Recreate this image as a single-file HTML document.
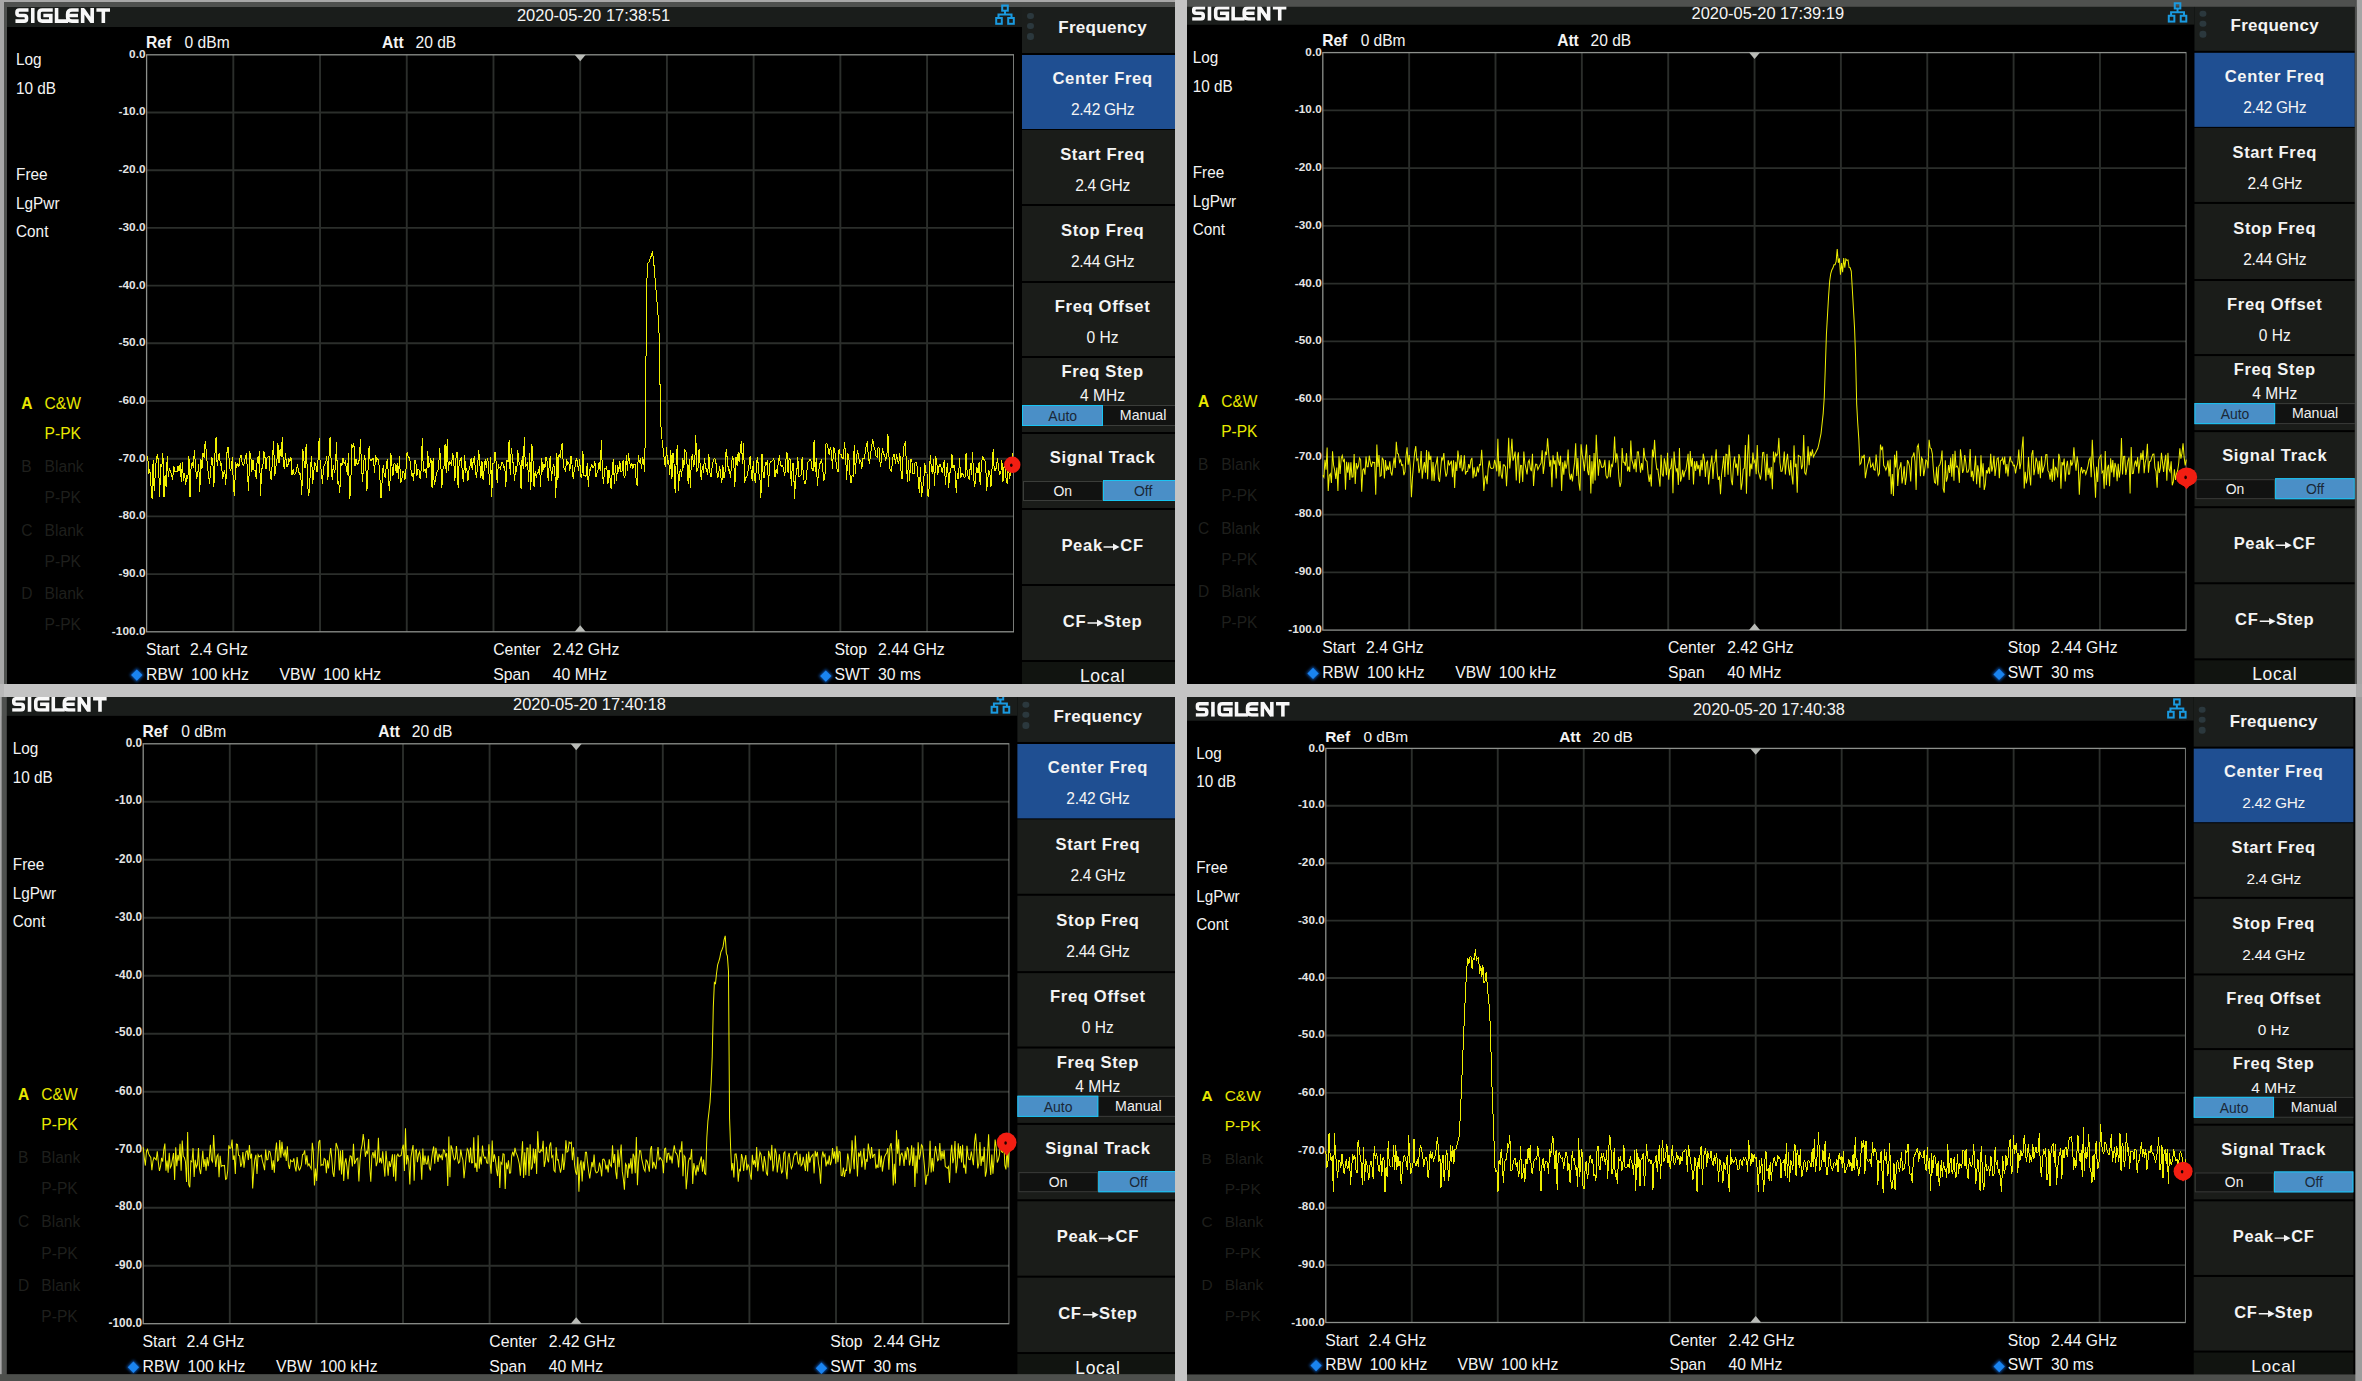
<!DOCTYPE html>
<html><head><meta charset="utf-8"><title>Spectrum</title><style>
html,body{margin:0;padding:0}
body{width:2362px;height:1381px;background:#c4c4c4;position:relative;overflow:hidden;font-family:"Liberation Sans",sans-serif}
.clip{position:absolute;overflow:hidden;background:#a7a7a7}
.pn{position:absolute;left:0;top:0;width:1300px;height:800px;transform-origin:0 0}
.pn div{position:absolute}
.t{white-space:nowrap}
.logo{font-weight:bold;font-size:20.5px;line-height:20.5px;color:#fafafa;transform:scaleX(1.1);transform-origin:0 0;letter-spacing:0px}
.dia{width:7.6px;height:7.6px;background:#1a84f0;transform:rotate(45deg);box-shadow:0 0 3px 1px #0b4fa8}
.dot{width:6.4px;height:6.4px;border-radius:50%;background:#2b383d}
.mk{width:16px;height:16px;border-radius:50%;background:#f01818}
</style></head><body>
<div class="clip" style="left:0px;top:0px;width:1175px;height:683.8px"><div class="pn" style="transform:translate(0px,0px) scale(1.00000,1.00000)">
<div style="left:-20px;top:-20px;width:1300px;height:800px;background:#000;"></div>
<div style="left:-20px;top:-20px;width:1042.2px;height:47px;background:#1a1d1b;"></div>
<svg style="position:absolute;left:14.5px;top:8.1px" width="95.8" height="15.1" viewBox="120 45 2130 340" preserveAspectRatio="none"><g fill="none" stroke="#f8f8f8" stroke-width="80"><path d="M420 89H215Q164 89 164 140V163Q164 214 215 214H325Q376 214 376 265V290Q376 341 325 341H130"/><path d="M515 45V385"/><path d="M960 89H725Q654 89 654 160V270Q654 341 725 341H916V214H750"/><path d="M1044 45V341H1300"/><path d="M1535 89H1385Q1290 89 1290 184V246Q1290 341 1385 341H1535M1330 214H1520"/><path d="M1624 385V45M1624 60L1836 370M1836 385V45"/><path d="M1930 89H2250M2084 89V385"/></g></svg>
<div class="t" style="left:593.5px;width:400px;margin-left:-200px;text-align:center;top:6.93px;font-size:16.5px;line-height:16.5px;color:#f4f4f4;">2020-05-20 17:38:51</div>
<svg style="position:absolute;left:995px;top:4px;overflow:visible;z-index:5" width="22" height="22" viewBox="0 0 22 22"><g fill="none" stroke="#1a9ae0" stroke-width="2"><rect x="7.2" y="1.5" width="5.6" height="5.2"/><path d="M10 6.7V10.6M3.5 14V10.6H16.5V14"/><rect x="1.2" y="14" width="5.6" height="5.8"/><rect x="13.2" y="14" width="5.6" height="5.8"/></g></svg>
<div class="t" style="left:15.6px;top:51.75px;font-size:16.6px;line-height:16.6px;color:#f4f4f4;transform:scaleX(0.925);transform-origin:0 0;">Log</div>
<div class="t" style="left:15.6px;top:80.75px;font-size:16.6px;line-height:16.6px;color:#f4f4f4;transform:scaleX(0.925);transform-origin:0 0;">10 dB</div>
<div class="t" style="left:15.6px;top:166.95px;font-size:16.6px;line-height:16.6px;color:#f4f4f4;transform:scaleX(0.925);transform-origin:0 0;">Free</div>
<div class="t" style="left:15.6px;top:195.75px;font-size:16.6px;line-height:16.6px;color:#f4f4f4;transform:scaleX(0.925);transform-origin:0 0;">LgPwr</div>
<div class="t" style="left:15.6px;top:224.25px;font-size:16.6px;line-height:16.6px;color:#f4f4f4;transform:scaleX(0.925);transform-origin:0 0;">Cont</div>
<div class="t" style="left:21.3px;top:395.99px;font-size:15.6px;line-height:15.6px;color:#e8e800;font-weight:bold;">A</div>
<div class="t" style="left:44.6px;top:395.99px;font-size:15.6px;line-height:15.6px;color:#e8e800;">C&amp;W</div>
<div class="t" style="left:44.6px;top:426.09px;font-size:15.6px;line-height:15.6px;color:#e8e800;">P-PK</div>
<div class="t" style="left:21.3px;top:459.09px;font-size:15.6px;line-height:15.6px;color:#1e1f1c;">B</div>
<div class="t" style="left:44.6px;top:459.09px;font-size:15.6px;line-height:15.6px;color:#1e1f1c;">Blank</div>
<div class="t" style="left:44.6px;top:489.59px;font-size:15.6px;line-height:15.6px;color:#1e1f1c;">P-PK</div>
<div class="t" style="left:21.3px;top:523.09px;font-size:15.6px;line-height:15.6px;color:#1e1f1c;">C</div>
<div class="t" style="left:44.6px;top:523.09px;font-size:15.6px;line-height:15.6px;color:#1e1f1c;">Blank</div>
<div class="t" style="left:44.6px;top:553.59px;font-size:15.6px;line-height:15.6px;color:#1e1f1c;">P-PK</div>
<div class="t" style="left:21.3px;top:586.29px;font-size:15.6px;line-height:15.6px;color:#1e1f1c;">D</div>
<div class="t" style="left:44.6px;top:586.29px;font-size:15.6px;line-height:15.6px;color:#1e1f1c;">Blank</div>
<div class="t" style="left:44.6px;top:616.79px;font-size:15.6px;line-height:15.6px;color:#1e1f1c;">P-PK</div>
<div class="t" style="left:146px;top:34.79px;font-size:15.6px;line-height:15.6px;color:#f4f4f4;font-weight:bold;">Ref</div>
<div class="t" style="left:184.6px;top:34.79px;font-size:15.6px;line-height:15.6px;color:#f4f4f4;">0 dBm</div>
<div class="t" style="left:382px;top:34.79px;font-size:15.6px;line-height:15.6px;color:#f4f4f4;font-weight:bold;">Att</div>
<div class="t" style="left:415.5px;top:34.79px;font-size:15.6px;line-height:15.6px;color:#f4f4f4;">20 dB</div>
<svg style="position:absolute;left:0;top:0;overflow:visible" width="1200" height="700"><line x1="146.6" y1="112.5" x2="1013.8" y2="112.5" stroke="#2b2e2b" stroke-width="1.9"/><line x1="233.32" y1="54.8" x2="233.32" y2="631.8" stroke="#2b2e2b" stroke-width="1.9"/><line x1="146.6" y1="170.2" x2="1013.8" y2="170.2" stroke="#2b2e2b" stroke-width="1.9"/><line x1="320.04" y1="54.8" x2="320.04" y2="631.8" stroke="#2b2e2b" stroke-width="1.9"/><line x1="146.6" y1="227.9" x2="1013.8" y2="227.9" stroke="#2b2e2b" stroke-width="1.9"/><line x1="406.76" y1="54.8" x2="406.76" y2="631.8" stroke="#2b2e2b" stroke-width="1.9"/><line x1="146.6" y1="285.6" x2="1013.8" y2="285.6" stroke="#2b2e2b" stroke-width="1.9"/><line x1="493.48" y1="54.8" x2="493.48" y2="631.8" stroke="#2b2e2b" stroke-width="1.9"/><line x1="146.6" y1="343.3" x2="1013.8" y2="343.3" stroke="#2b2e2b" stroke-width="1.9"/><line x1="580.2" y1="54.8" x2="580.2" y2="631.8" stroke="#2b2e2b" stroke-width="1.9"/><line x1="146.6" y1="401" x2="1013.8" y2="401" stroke="#2b2e2b" stroke-width="1.9"/><line x1="666.92" y1="54.8" x2="666.92" y2="631.8" stroke="#2b2e2b" stroke-width="1.9"/><line x1="146.6" y1="458.7" x2="1013.8" y2="458.7" stroke="#2b2e2b" stroke-width="1.9"/><line x1="753.64" y1="54.8" x2="753.64" y2="631.8" stroke="#2b2e2b" stroke-width="1.9"/><line x1="146.6" y1="516.4" x2="1013.8" y2="516.4" stroke="#2b2e2b" stroke-width="1.9"/><line x1="840.36" y1="54.8" x2="840.36" y2="631.8" stroke="#2b2e2b" stroke-width="1.9"/><line x1="146.6" y1="574.1" x2="1013.8" y2="574.1" stroke="#2b2e2b" stroke-width="1.9"/><line x1="927.08" y1="54.8" x2="927.08" y2="631.8" stroke="#2b2e2b" stroke-width="1.9"/><rect x="146.6" y="54.8" width="867.2" height="577" fill="none" stroke="#8d908c" stroke-width="1.3"/><path d="M574.7 54.8L585.7 54.8L580.2 61.3Z" fill="#b8bab6"/><path d="M574.7 631.8L585.7 631.8L580.2 625.3Z" fill="#b8bab6"/></svg>
<div class="t" style="left:145.6px;width:200px;margin-left:-200px;text-align:right;top:48.71px;font-size:11.8px;line-height:11.8px;color:#e4e4e4;font-weight:bold;letter-spacing:0.05px;">0.0</div>
<div class="t" style="left:145.6px;width:200px;margin-left:-200px;text-align:right;top:106.41px;font-size:11.8px;line-height:11.8px;color:#e4e4e4;font-weight:bold;letter-spacing:0.05px;">-10.0</div>
<div class="t" style="left:145.6px;width:200px;margin-left:-200px;text-align:right;top:164.11px;font-size:11.8px;line-height:11.8px;color:#e4e4e4;font-weight:bold;letter-spacing:0.05px;">-20.0</div>
<div class="t" style="left:145.6px;width:200px;margin-left:-200px;text-align:right;top:221.81px;font-size:11.8px;line-height:11.8px;color:#e4e4e4;font-weight:bold;letter-spacing:0.05px;">-30.0</div>
<div class="t" style="left:145.6px;width:200px;margin-left:-200px;text-align:right;top:279.51px;font-size:11.8px;line-height:11.8px;color:#e4e4e4;font-weight:bold;letter-spacing:0.05px;">-40.0</div>
<div class="t" style="left:145.6px;width:200px;margin-left:-200px;text-align:right;top:337.21px;font-size:11.8px;line-height:11.8px;color:#e4e4e4;font-weight:bold;letter-spacing:0.05px;">-50.0</div>
<div class="t" style="left:145.6px;width:200px;margin-left:-200px;text-align:right;top:394.91px;font-size:11.8px;line-height:11.8px;color:#e4e4e4;font-weight:bold;letter-spacing:0.05px;">-60.0</div>
<div class="t" style="left:145.6px;width:200px;margin-left:-200px;text-align:right;top:452.61px;font-size:11.8px;line-height:11.8px;color:#e4e4e4;font-weight:bold;letter-spacing:0.05px;">-70.0</div>
<div class="t" style="left:145.6px;width:200px;margin-left:-200px;text-align:right;top:510.31px;font-size:11.8px;line-height:11.8px;color:#e4e4e4;font-weight:bold;letter-spacing:0.05px;">-80.0</div>
<div class="t" style="left:145.6px;width:200px;margin-left:-200px;text-align:right;top:568.01px;font-size:11.8px;line-height:11.8px;color:#e4e4e4;font-weight:bold;letter-spacing:0.05px;">-90.0</div>
<div class="t" style="left:145.6px;width:200px;margin-left:-200px;text-align:right;top:625.71px;font-size:11.8px;line-height:11.8px;color:#e4e4e4;font-weight:bold;letter-spacing:0.05px;">-100.0</div>
<div class="t" style="left:146px;top:642.03px;font-size:15.8px;line-height:15.8px;color:#f4f4f4;">Start</div>
<div class="t" style="left:190px;top:642.03px;font-size:15.8px;line-height:15.8px;color:#f4f4f4;">2.4 GHz</div>
<div class="t" style="left:493.2px;top:642.03px;font-size:15.8px;line-height:15.8px;color:#f4f4f4;">Center</div>
<div class="t" style="left:552.7px;top:642.03px;font-size:15.8px;line-height:15.8px;color:#f4f4f4;">2.42 GHz</div>
<div class="t" style="left:834.5px;top:642.03px;font-size:15.8px;line-height:15.8px;color:#f4f4f4;">Stop</div>
<div class="t" style="left:878px;top:642.03px;font-size:15.8px;line-height:15.8px;color:#f4f4f4;">2.44 GHz</div>
<div class="t" style="left:146px;top:667.43px;font-size:15.8px;line-height:15.8px;color:#f4f4f4;">RBW</div>
<div class="t" style="left:191px;top:667.43px;font-size:15.8px;line-height:15.8px;color:#f4f4f4;">100 kHz</div>
<div class="t" style="left:279.5px;top:667.43px;font-size:15.8px;line-height:15.8px;color:#f4f4f4;">VBW</div>
<div class="t" style="left:323.3px;top:667.43px;font-size:15.8px;line-height:15.8px;color:#f4f4f4;">100 kHz</div>
<div class="t" style="left:493.2px;top:667.43px;font-size:15.8px;line-height:15.8px;color:#f4f4f4;">Span</div>
<div class="t" style="left:552.7px;top:667.43px;font-size:15.8px;line-height:15.8px;color:#f4f4f4;">40 MHz</div>
<div class="t" style="left:834.5px;top:667.43px;font-size:15.8px;line-height:15.8px;color:#f4f4f4;">SWT</div>
<div class="t" style="left:878px;top:667.43px;font-size:15.8px;line-height:15.8px;color:#f4f4f4;">30 ms</div>
<div class="dia" style="left:133.2px;top:671.2px"></div>
<div class="dia" style="left:822.2px;top:671.7px"></div>
<div style="left:1013.8px;top:27px;width:8.4px;height:800px;background:#000;"></div>
<div style="left:1022.2px;top:-20px;width:160.8px;height:72.7px;background:#1b1e1c;"></div>
<div class="dot" style="left:1027.4px;top:12.9px"></div>
<div class="dot" style="left:1027.4px;top:23.1px"></div>
<div class="dot" style="left:1027.4px;top:33.3px"></div>
<div class="t" style="left:1102.6px;width:400px;margin-left:-200px;text-align:center;top:19.31px;font-size:17px;line-height:17px;color:#f4f4f4;font-weight:bold;letter-spacing:0.3px;">Frequency</div>
<div style="left:1022.2px;top:54.5px;width:160.8px;height:74.2px;background:#1f4f92;"></div>
<div style="left:1022.2px;top:130.3px;width:160.8px;height:73.8px;background:#1a1c19;"></div>
<div style="left:1022.2px;top:206.2px;width:160.8px;height:74.4px;background:#1a1c19;"></div>
<div style="left:1022.2px;top:282.8px;width:160.8px;height:72.9px;background:#1a1c19;"></div>
<div style="left:1022.2px;top:358.2px;width:160.8px;height:73.5px;background:#1a1c19;"></div>
<div style="left:1022.2px;top:434.4px;width:160.8px;height:73.5px;background:#1a1c19;"></div>
<div style="left:1022.2px;top:510.2px;width:160.8px;height:73.5px;background:#1a1c19;"></div>
<div style="left:1022.2px;top:585.9px;width:160.8px;height:74px;background:#1a1c19;"></div>
<div style="left:1022.2px;top:662px;width:160.8px;height:40px;background:#111410;"></div>
<div class="t" style="left:1102.6px;width:400px;margin-left:-200px;text-align:center;top:70.85px;font-size:16.6px;line-height:16.6px;color:#f4f4f4;font-weight:bold;letter-spacing:0.65px;">Center Freq</div>
<div class="t" style="left:1102.6px;width:400px;margin-left:-200px;text-align:center;top:101.99px;font-size:15.6px;line-height:15.6px;color:#f4f4f4;letter-spacing:-0.35px;">2.42 GHz</div>
<div class="t" style="left:1102.6px;width:400px;margin-left:-200px;text-align:center;top:146.75px;font-size:16.6px;line-height:16.6px;color:#f4f4f4;font-weight:bold;letter-spacing:0.65px;">Start Freq</div>
<div class="t" style="left:1102.6px;width:400px;margin-left:-200px;text-align:center;top:177.99px;font-size:15.6px;line-height:15.6px;color:#f4f4f4;letter-spacing:-0.35px;">2.4 GHz</div>
<div class="t" style="left:1102.6px;width:400px;margin-left:-200px;text-align:center;top:223.25px;font-size:16.6px;line-height:16.6px;color:#f4f4f4;font-weight:bold;letter-spacing:0.65px;">Stop Freq</div>
<div class="t" style="left:1102.6px;width:400px;margin-left:-200px;text-align:center;top:253.99px;font-size:15.6px;line-height:15.6px;color:#f4f4f4;letter-spacing:-0.35px;">2.44 GHz</div>
<div class="t" style="left:1102.6px;width:400px;margin-left:-200px;text-align:center;top:298.75px;font-size:16.6px;line-height:16.6px;color:#f4f4f4;font-weight:bold;letter-spacing:0.65px;">Freq Offset</div>
<div class="t" style="left:1102.6px;width:400px;margin-left:-200px;text-align:center;top:329.99px;font-size:15.6px;line-height:15.6px;color:#f4f4f4;">0 Hz</div>
<div class="t" style="left:1102.6px;width:400px;margin-left:-200px;text-align:center;top:363.95px;font-size:16.6px;line-height:16.6px;color:#f4f4f4;font-weight:bold;letter-spacing:0.65px;">Freq Step</div>
<div class="t" style="left:1102.6px;width:400px;margin-left:-200px;text-align:center;top:388.09px;font-size:15.6px;line-height:15.6px;color:#f4f4f4;">4 MHz</div>
<div style="left:1022.2px;top:404.6px;width:160.8px;height:21.4px;background:#111211;box-sizing:border-box;border-top:1.3px solid #3b3d3a;border-bottom:1.3px solid #3b3d3a;"></div>
<div style="left:1022.2px;top:404.6px;width:81.1px;height:21.4px;background:#4a8fc7;box-sizing:border-box;border:1.6px solid #18c4f2;"></div>
<div class="t" style="left:1062.75px;width:400px;margin-left:-200px;text-align:center;top:408.55px;font-size:14px;line-height:14px;color:#1a2838;">Auto</div>
<div class="t" style="left:1143.15px;width:400px;margin-left:-200px;text-align:center;top:408.38px;font-size:14.2px;line-height:14.2px;color:#f0f0f0;">Manual</div>
<div class="t" style="left:1102.6px;width:400px;margin-left:-200px;text-align:center;top:450.35px;font-size:16.6px;line-height:16.6px;color:#f4f4f4;font-weight:bold;letter-spacing:0.65px;">Signal Track</div>
<div style="left:1023px;top:480.6px;width:80.3px;height:20.4px;background:#111211;box-sizing:border-box;border:1.3px solid #3b3d3a;"></div>
<div style="left:1103.3px;top:480.4px;width:79.7px;height:20.8px;background:#4a8fc7;box-sizing:border-box;border:1.6px solid #18c4f2;"></div>
<div class="t" style="left:1062.75px;width:400px;margin-left:-200px;text-align:center;top:483.55px;font-size:14px;line-height:14px;color:#f0f0f0;">On</div>
<div class="t" style="left:1143.15px;width:400px;margin-left:-200px;text-align:center;top:483.55px;font-size:14px;line-height:14px;color:#1a2838;">Off</div>
<div class="t" style="left:1102.6px;width:400px;margin-left:-200px;text-align:center;top:538.25px;font-size:16.6px;line-height:16.6px;color:#f4f4f4;font-weight:bold;letter-spacing:0.65px;">Peak<svg width="17" height="10" viewBox="0 0 17 10" style="display:inline-block;vertical-align:-1.2px;margin:0 0.3px"><path d="M0.5 5H12" stroke="#f4f4f4" stroke-width="1.5"/><path d="M10 1.6L16.6 5L10 8.4Z" fill="#f4f4f4"/></svg>CF</div>
<div class="t" style="left:1102.6px;width:400px;margin-left:-200px;text-align:center;top:614.25px;font-size:16.6px;line-height:16.6px;color:#f4f4f4;font-weight:bold;letter-spacing:0.65px;">CF<svg width="17" height="10" viewBox="0 0 17 10" style="display:inline-block;vertical-align:-1.2px;margin:0 0.3px"><path d="M0.5 5H12" stroke="#f4f4f4" stroke-width="1.5"/><path d="M10 1.6L16.6 5L10 8.4Z" fill="#f4f4f4"/></svg>Step</div>
<div class="t" style="left:1102.6px;width:400px;margin-left:-200px;text-align:center;top:668.49px;font-size:17.5px;line-height:17.5px;color:#f4f4f4;letter-spacing:0.7px;">Local</div>
<svg style="position:absolute;left:0;top:0;overflow:visible" width="1200" height="700"><polyline points="146.6,455.68 147.69,456.41 148.77,473.6 149.86,469.32 150.94,485.45 152.03,498.6 153.11,460.49 154.2,490.83 155.28,473.57 156.37,458.35 157.45,454.57 158.54,462.12 159.62,497.39 160.71,464.95 161.79,466.5 162.88,452.81 163.97,497.42 165.05,475.01 166.14,487.33 167.22,456.32 168.31,476.62 169.39,468.08 170.48,471.01 171.56,474.73 172.65,480.33 173.73,465.98 174.82,471.34 175.9,471.8 176.99,471.89 178.08,466.04 179.16,471.14 180.25,462.95 181.33,482.06 182.42,461.72 183.5,481.21 184.59,473.24 185.67,484.94 186.76,475.42 187.84,478.9 188.93,455.8 190.01,497.1 191.1,466.97 192.18,462.02 193.27,467.68 194.36,450.16 195.44,465.04 196.53,477.73 197.61,475.45 198.7,464.17 199.78,491.6 200.87,459.06 201.95,469.01 203.04,452.79 204.12,457.85 205.21,440.99 206.29,451.87 207.38,464.96 208.47,474.82 209.55,483.5 210.64,469.92 211.72,457.43 212.81,461.17 213.89,487.07 214.98,453.14 216.06,437.46 217.15,465.77 218.23,458.95 219.32,452.63 220.4,466.17 221.49,463.09 222.57,478.98 223.66,472.97 224.75,469.81 225.83,485.03 226.92,453.02 228,447.07 229.09,458.56 230.17,470.95 231.26,468.38 232.34,457.51 233.43,486.26 234.51,496.02 235.6,462.4 236.68,466.6 237.77,463.72 238.86,467.05 239.94,458.58 241.03,455.16 242.11,462.28 243.2,465.82 244.28,463.55 245.37,457.34 246.45,453 247.54,474.73 248.62,491.16 249.71,451.45 250.79,456.22 251.88,471.69 252.96,460.1 254.05,469.97 255.14,470.31 256.22,478.51 257.31,457.19 258.39,464.25 259.48,450.53 260.56,496.29 261.65,468.39 262.73,468.47 263.82,450.55 264.9,456.09 265.99,469.35 267.07,457.07 268.16,457.01 269.25,456.81 270.33,477.09 271.42,479.89 272.5,457.06 273.59,440.84 274.67,476.38 275.76,467.38 276.84,461.72 277.93,443.21 279.01,462.74 280.1,449.24 281.18,457.39 282.27,437.42 283.35,465.46 284.44,468.48 285.53,452.8 286.61,465.96 287.7,466.99 288.78,458.55 289.87,461.56 290.95,457.18 292.04,474.99 293.12,469.02 294.21,474.63 295.29,473.46 296.38,470.96 297.46,464.21 298.55,471.32 299.64,474.03 300.72,473.63 301.81,495.25 302.89,449.28 303.98,461.24 305.06,468.04 306.15,444.52 307.23,469.15 308.32,495.88 309.4,491.89 310.49,467.23 311.57,456.08 312.66,483.55 313.74,472.21 314.83,462.07 315.92,465.65 317,471.98 318.09,459.31 319.17,438.48 320.26,466.43 321.34,469.99 322.43,483.83 323.51,466.92 324.6,464.2 325.68,463.64 326.77,455.81 327.85,479.8 328.94,457.23 330.03,437.51 331.11,460.04 332.2,480.36 333.28,465.34 334.37,472.73 335.45,467.88 336.54,442.51 337.62,483.51 338.71,481.34 339.79,492.88 340.88,462.64 341.96,465.67 343.05,458.09 344.13,463.52 345.22,461.17 346.31,468.08 347.39,474.75 348.48,453.29 349.56,499.39 350.65,491.53 351.73,444.24 352.82,447.11 353.9,443.44 354.99,465.71 356.07,458.85 357.16,464.36 358.24,463.3 359.33,459.38 360.42,439.39 361.5,466.09 362.59,481.71 363.67,462.15 364.76,454.82 365.84,466.57 366.93,490.62 368.01,470.22 369.1,446.44 370.18,460.71 371.27,460.73 372.35,459.03 373.44,458.71 374.52,472.72 375.61,455.16 376.7,460.57 377.78,458.26 378.87,462.92 379.95,478.36 381.04,498.47 382.12,481.36 383.21,465.24 384.29,475.36 385.38,476.91 386.46,463.58 387.55,459.08 388.63,482.21 389.72,491.35 390.81,452.68 391.89,465.28 392.98,475.48 394.06,463.09 395.15,464.48 396.23,472.51 397.32,462.68 398.4,478.96 399.49,455.65 400.57,483.2 401.66,480.6 402.74,471.86 403.83,471.48 404.91,479.76 406,469.05 407.09,452.2 408.17,456.44 409.26,457.62 410.34,462.64 411.43,474.93 412.51,473.53 413.6,481.4 414.68,460.9 415.77,460.76 416.85,476.32 417.94,469.64 419.02,470.17 420.11,478.98 421.2,468.94 422.28,438.25 423.37,472.35 424.45,469.46 425.54,469.34 426.62,477.69 427.71,451.48 428.79,468.39 429.88,463.49 430.96,458.51 432.05,488.24 433.13,457.69 434.22,485.14 435.3,481.4 436.39,473 437.48,471.75 438.56,468.18 439.65,447.79 440.73,462.26 441.82,488.11 442.9,469.42 443.99,466.24 445.07,443.68 446.16,472.91 447.24,439.39 448.33,470.83 449.41,461.68 450.5,462.45 451.59,464.63 452.67,453.09 453.76,460.77 454.84,481.4 455.93,458.01 457.01,451.9 458.1,488.18 459.18,462.05 460.27,459.96 461.35,457.17 462.44,474.76 463.52,482.18 464.61,454.63 465.69,472.85 466.78,467.63 467.87,481.35 468.95,470.27 470.04,465.57 471.12,458.5 472.21,469.89 473.29,459.96 474.38,456.47 475.46,471.77 476.55,477.62 477.63,464.85 478.72,450.37 479.8,462.87 480.89,478.21 481.98,461.48 483.06,480.06 484.15,470.27 485.23,458.71 486.32,467.65 487.4,457.7 488.49,463.5 489.57,484.97 490.66,457.28 491.74,496.62 492.83,463.54 493.91,463.78 495,451.76 496.08,461.79 497.17,483.37 498.26,464.44 499.34,467.55 500.43,468.79 501.51,462.84 502.6,462.48 503.68,467.57 504.77,466.73 505.85,486.66 506.94,459.67 508.02,462.33 509.11,440.17 510.19,474.89 511.28,448.08 512.37,457.08 513.45,466.08 514.54,481.38 515.62,466.55 516.71,471.77 517.79,450.18 518.88,462.01 519.96,463.31 521.05,489.32 522.13,456.4 523.22,468.59 524.3,437.17 525.39,466.84 526.47,465.84 527.56,461.69 528.65,481.55 529.73,452.78 530.82,489.72 531.9,444.01 532.99,460.27 534.07,486.99 535.16,471.25 536.24,477.71 537.33,472.47 538.41,472.03 539.5,465.88 540.58,486.54 541.67,457.6 542.76,472.46 543.84,463.74 544.93,467.82 546.01,457.07 547.1,460.91 548.18,481.11 549.27,463.65 550.35,455.59 551.44,481.25 552.52,467.88 553.61,465.39 554.69,467.36 555.78,498.07 556.86,452.81 557.95,479.86 559.04,454.67 560.12,457.64 561.21,448.13 562.29,443.02 563.38,467.66 564.46,468.23 565.55,470.57 566.63,459.39 567.72,463.72 568.8,462.85 569.89,470.61 570.97,455.8 572.06,464.93 573.15,478.83 574.23,470.05 575.32,465.66 576.4,457.68 577.49,462.66 578.57,470.69 579.66,459.02 580.74,476.55 581.83,478.03 582.91,451.3 584,475.67 585.08,476.18 586.17,475.58 587.25,462.85 588.34,487.24 589.43,469.98 590.51,470.1 591.6,463.93 592.68,467.33 593.77,467.15 594.85,461.28 595.94,476.71 597.02,472.89 598.11,469.7 599.19,461.85 600.28,470.77 601.36,440.24 602.45,473.05 603.54,483.7 604.62,468.29 605.71,468.33 606.79,466.83 607.88,484.31 608.96,470.2 610.05,478.09 611.13,488.74 612.22,471.08 613.3,458.86 614.39,483.54 615.47,465.52 616.56,481.3 617.64,465.19 618.73,471.78 619.82,461.51 620.9,471.18 621.99,470.94 623.07,460.5 624.16,478.03 625.24,475.28 626.33,455.08 627.41,470.59 628.5,453.55 629.58,462.11 630.67,467.74 631.75,462.96 632.84,469.24 633.93,464.06 635.01,464.43 636.1,479.04 637.18,485.81 638.27,455.4 639.35,462.91 640.44,457.83 641.52,469.21 642.61,457.06 643.69,462.35 644.78,471.66 645.86,368.35 646.95,278.85 648.03,263.19 649.12,261.75 650.21,258.07 651.29,255.85 652.38,251.03 653.46,258.76 654.55,272.18 655.63,285.17 656.72,298.68 657.8,312.23 658.89,326.39 659.97,382.85 661.06,428.7 662.14,440.81 663.23,449.8 664.32,459.53 665.4,467.45 666.49,447.42 667.57,462.6 668.66,460.47 669.74,474.87 670.83,450.5 671.91,479.15 673,453.12 674.08,464.24 675.17,492.59 676.25,458.44 677.34,445.15 678.42,491.44 679.51,472.23 680.6,469.01 681.68,477.1 682.77,457.97 683.85,468.09 684.94,450.39 686.02,451.72 687.11,464.78 688.19,483.77 689.28,458.75 690.36,487.53 691.45,457.8 692.53,454.09 693.62,467.15 694.71,462.09 695.79,435.33 696.88,471.62 697.96,469.07 699.05,448.76 700.13,464.4 701.22,480.12 702.3,466.19 703.39,472.58 704.47,458.45 705.56,467.23 706.64,470.11 707.73,474.67 708.81,453.96 709.9,472.34 710.99,476.84 712.07,467.47 713.16,461.19 714.24,458.31 715.33,459.45 716.41,465.92 717.5,478.15 718.58,475.04 719.67,465.75 720.75,476.71 721.84,483.17 722.92,465.4 724.01,477.96 725.1,471.14 726.18,448.83 727.27,458.86 728.35,470.06 729.44,469.48 730.52,478.06 731.61,462.04 732.69,455.81 733.78,462.23 734.86,486.56 735.95,456.98 737.03,465.54 738.12,452.53 739.2,462.21 740.29,450 741.38,440.58 742.46,463.59 743.55,443.3 744.63,482.77 745.72,477.64 746.8,477.44 747.89,472 748.97,465.73 750.06,456.14 751.14,471.09 752.23,480.95 753.31,461.14 754.4,479.08 755.49,483.2 756.57,462.1 757.66,457.1 758.74,473.47 759.83,476.49 760.91,497.77 762,453.7 763.08,473.56 764.17,478.19 765.25,462.41 766.34,463.9 767.42,460.43 768.51,487.32 769.59,464.03 770.68,461.4 771.77,461.46 772.85,460.26 773.94,458.53 775.02,476.83 776.11,469.48 777.19,474.03 778.28,462.35 779.36,455.57 780.45,464.45 781.53,466.35 782.62,465.21 783.7,470.32 784.79,475.89 785.88,460.23 786.96,452.09 788.05,472.92 789.13,458.71 790.22,459.03 791.3,485.91 792.39,463.74 793.47,463.49 794.56,499.07 795.64,476.05 796.73,472.48 797.81,457.27 798.9,476.23 799.98,475.94 801.07,474.88 802.16,456.86 803.24,474.06 804.33,483.08 805.41,483.53 806.5,476.94 807.58,462.18 808.67,461.29 809.75,459.49 810.84,459.24 811.92,468.33 813.01,470.97 814.09,440.39 815.18,472.13 816.27,458.39 817.35,485.6 818.44,473.39 819.52,464.63 820.61,462.32 821.69,459.8 822.78,469.51 823.86,480.5 824.95,476.06 826.03,443.4 827.12,444.25 828.2,448.61 829.29,455.2 830.37,446.72 831.46,452.89 832.55,468.6 833.63,446.93 834.72,450.82 835.8,459.85 836.89,468.74 837.97,472.18 839.06,449.18 840.14,454.32 841.23,454.43 842.31,458.7 843.4,458.74 844.48,441.95 845.57,454.27 846.66,480.09 847.74,452.76 848.83,457.61 849.91,474.39 851,482.83 852.08,475.27 853.17,476.24 854.25,444.62 855.34,474.08 856.42,456.41 857.51,451.89 858.59,455.51 859.68,463.56 860.76,459.76 861.85,468.9 862.94,458.75 864.02,458.73 865.11,453.34 866.19,445.92 867.28,441.52 868.36,456.99 869.45,464.05 870.53,453.64 871.62,446.6 872.7,439.24 873.79,445.96 874.87,449.32 875.96,456.2 877.05,457.27 878.13,446.88 879.22,448.11 880.3,467.09 881.39,461.4 882.47,447.64 883.56,453.76 884.64,455.15 885.73,459.82 886.81,457.89 887.9,434.07 888.98,456.6 890.07,469.82 891.15,471.37 892.24,465.09 893.33,454.24 894.41,454.66 895.5,464 896.58,454.19 897.67,460.21 898.75,464.25 899.84,453.13 900.92,470.59 902.01,478.93 903.09,456.08 904.18,444.23 905.26,442.5 906.35,461.62 907.44,481.5 908.52,460.16 909.61,481.31 910.69,459.67 911.78,459.39 912.86,473.4 913.95,474.15 915.03,463.06 916.12,462.76 917.2,466.27 918.29,480.62 919.37,492.77 920.46,467.03 921.54,497 922.63,488.01 923.72,481.37 924.8,462.71 925.89,472.23 926.97,472.57 928.06,496.68 929.14,487.66 930.23,454.67 931.31,467.72 932.4,474.25 933.48,459.19 934.57,485.62 935.65,456.4 936.74,461.33 937.83,474.67 938.91,466.79 940,463.99 941.08,467.62 942.17,473.2 943.25,465.97 944.34,459.94 945.42,484.86 946.51,471.33 947.59,463.17 948.68,487.75 949.76,473.1 950.85,470.56 951.93,454.08 953.02,468.2 954.11,465.09 955.19,472.74 956.28,492.56 957.36,473.31 958.45,479.21 959.53,457.97 960.62,478.2 961.7,473.6 962.79,473.83 963.87,476.74 964.96,478.01 966.04,452.98 967.13,472.28 968.22,476.7 969.3,479.62 970.39,462.68 971.47,475.12 972.56,451.71 973.64,477.81 974.73,486.88 975.81,474.79 976.9,467.24 977.98,473.04 979.07,462.51 980.15,484.58 981.24,468.76 982.32,456.36 983.41,458.15 984.5,460.43 985.58,461.29 986.67,491.13 987.75,478.59 988.84,470.47 989.92,473.85 991.01,486.47 992.09,467.93 993.18,449.25 994.26,470.71 995.35,470.22 996.43,467.51 997.52,457.7 998.61,468.65 999.69,473.86 1000.78,473.29 1001.86,460.4 1002.95,482.36 1004.03,466.61 1005.12,467.96 1006.2,480.43 1007.29,484.39 1008.37,464.54 1009.46,478.8 1010.54,472.59 1011.63,461.97 1012.71,453.47 1013.8,465.76" fill="none" stroke="#f0f000" stroke-width="1" shape-rendering="crispEdges"/></svg>
<svg style="position:absolute;left:0;top:0;overflow:visible" width="10" height="10"><ellipse cx="1012.3" cy="464.8" rx="8.2" ry="8.2" fill="#f21e12"/><ellipse cx="1011.3" cy="465.3" rx="1.3" ry="1.8" fill="#200"/></svg>
<div style="left:-5px;top:-5px;width:1205px;height:6.5px;background:#a8a8a8;"></div>
<div style="left:-5px;top:-5px;width:9px;height:705px;background:#a8a8a8;"></div>
<div style="left:4px;top:1.5px;width:1196px;height:5.5px;background:#4f514f;"></div>
<div style="left:4px;top:1.5px;width:3px;height:698.5px;background:#4f514f;"></div>
</div></div>
<div class="clip" style="left:1187px;top:0px;width:1175px;height:683.8px"><div class="pn" style="transform:translate(-10.17px,-2.25px) scale(0.99573,1.00087)">
<div style="left:-20px;top:-20px;width:1300px;height:800px;background:#000;"></div>
<div style="left:-20px;top:-20px;width:1042.2px;height:47px;background:#1a1d1b;"></div>
<svg style="position:absolute;left:14.5px;top:8.1px" width="95.8" height="15.1" viewBox="120 45 2130 340" preserveAspectRatio="none"><g fill="none" stroke="#f8f8f8" stroke-width="80"><path d="M420 89H215Q164 89 164 140V163Q164 214 215 214H325Q376 214 376 265V290Q376 341 325 341H130"/><path d="M515 45V385"/><path d="M960 89H725Q654 89 654 160V270Q654 341 725 341H916V214H750"/><path d="M1044 45V341H1300"/><path d="M1535 89H1385Q1290 89 1290 184V246Q1290 341 1385 341H1535M1330 214H1520"/><path d="M1624 385V45M1624 60L1836 370M1836 385V45"/><path d="M1930 89H2250M2084 89V385"/></g></svg>
<div class="t" style="left:593.5px;width:400px;margin-left:-200px;text-align:center;top:6.93px;font-size:16.5px;line-height:16.5px;color:#f4f4f4;">2020-05-20 17:39:19</div>
<svg style="position:absolute;left:995px;top:4px;overflow:visible;z-index:5" width="22" height="22" viewBox="0 0 22 22"><g fill="none" stroke="#1a9ae0" stroke-width="2"><rect x="7.2" y="1.5" width="5.6" height="5.2"/><path d="M10 6.7V10.6M3.5 14V10.6H16.5V14"/><rect x="1.2" y="14" width="5.6" height="5.8"/><rect x="13.2" y="14" width="5.6" height="5.8"/></g></svg>
<div class="t" style="left:15.6px;top:51.75px;font-size:16.6px;line-height:16.6px;color:#f4f4f4;transform:scaleX(0.925);transform-origin:0 0;">Log</div>
<div class="t" style="left:15.6px;top:80.75px;font-size:16.6px;line-height:16.6px;color:#f4f4f4;transform:scaleX(0.925);transform-origin:0 0;">10 dB</div>
<div class="t" style="left:15.6px;top:166.95px;font-size:16.6px;line-height:16.6px;color:#f4f4f4;transform:scaleX(0.925);transform-origin:0 0;">Free</div>
<div class="t" style="left:15.6px;top:195.75px;font-size:16.6px;line-height:16.6px;color:#f4f4f4;transform:scaleX(0.925);transform-origin:0 0;">LgPwr</div>
<div class="t" style="left:15.6px;top:224.25px;font-size:16.6px;line-height:16.6px;color:#f4f4f4;transform:scaleX(0.925);transform-origin:0 0;">Cont</div>
<div class="t" style="left:21.3px;top:395.99px;font-size:15.6px;line-height:15.6px;color:#e8e800;font-weight:bold;">A</div>
<div class="t" style="left:44.6px;top:395.99px;font-size:15.6px;line-height:15.6px;color:#e8e800;">C&amp;W</div>
<div class="t" style="left:44.6px;top:426.09px;font-size:15.6px;line-height:15.6px;color:#e8e800;">P-PK</div>
<div class="t" style="left:21.3px;top:459.09px;font-size:15.6px;line-height:15.6px;color:#1e1f1c;">B</div>
<div class="t" style="left:44.6px;top:459.09px;font-size:15.6px;line-height:15.6px;color:#1e1f1c;">Blank</div>
<div class="t" style="left:44.6px;top:489.59px;font-size:15.6px;line-height:15.6px;color:#1e1f1c;">P-PK</div>
<div class="t" style="left:21.3px;top:523.09px;font-size:15.6px;line-height:15.6px;color:#1e1f1c;">C</div>
<div class="t" style="left:44.6px;top:523.09px;font-size:15.6px;line-height:15.6px;color:#1e1f1c;">Blank</div>
<div class="t" style="left:44.6px;top:553.59px;font-size:15.6px;line-height:15.6px;color:#1e1f1c;">P-PK</div>
<div class="t" style="left:21.3px;top:586.29px;font-size:15.6px;line-height:15.6px;color:#1e1f1c;">D</div>
<div class="t" style="left:44.6px;top:586.29px;font-size:15.6px;line-height:15.6px;color:#1e1f1c;">Blank</div>
<div class="t" style="left:44.6px;top:616.79px;font-size:15.6px;line-height:15.6px;color:#1e1f1c;">P-PK</div>
<div class="t" style="left:146px;top:34.79px;font-size:15.6px;line-height:15.6px;color:#f4f4f4;font-weight:bold;">Ref</div>
<div class="t" style="left:184.6px;top:34.79px;font-size:15.6px;line-height:15.6px;color:#f4f4f4;">0 dBm</div>
<div class="t" style="left:382px;top:34.79px;font-size:15.6px;line-height:15.6px;color:#f4f4f4;font-weight:bold;">Att</div>
<div class="t" style="left:415.5px;top:34.79px;font-size:15.6px;line-height:15.6px;color:#f4f4f4;">20 dB</div>
<svg style="position:absolute;left:0;top:0;overflow:visible" width="1200" height="700"><line x1="146.6" y1="112.5" x2="1013.8" y2="112.5" stroke="#2b2e2b" stroke-width="1.9"/><line x1="233.32" y1="54.8" x2="233.32" y2="631.8" stroke="#2b2e2b" stroke-width="1.9"/><line x1="146.6" y1="170.2" x2="1013.8" y2="170.2" stroke="#2b2e2b" stroke-width="1.9"/><line x1="320.04" y1="54.8" x2="320.04" y2="631.8" stroke="#2b2e2b" stroke-width="1.9"/><line x1="146.6" y1="227.9" x2="1013.8" y2="227.9" stroke="#2b2e2b" stroke-width="1.9"/><line x1="406.76" y1="54.8" x2="406.76" y2="631.8" stroke="#2b2e2b" stroke-width="1.9"/><line x1="146.6" y1="285.6" x2="1013.8" y2="285.6" stroke="#2b2e2b" stroke-width="1.9"/><line x1="493.48" y1="54.8" x2="493.48" y2="631.8" stroke="#2b2e2b" stroke-width="1.9"/><line x1="146.6" y1="343.3" x2="1013.8" y2="343.3" stroke="#2b2e2b" stroke-width="1.9"/><line x1="580.2" y1="54.8" x2="580.2" y2="631.8" stroke="#2b2e2b" stroke-width="1.9"/><line x1="146.6" y1="401" x2="1013.8" y2="401" stroke="#2b2e2b" stroke-width="1.9"/><line x1="666.92" y1="54.8" x2="666.92" y2="631.8" stroke="#2b2e2b" stroke-width="1.9"/><line x1="146.6" y1="458.7" x2="1013.8" y2="458.7" stroke="#2b2e2b" stroke-width="1.9"/><line x1="753.64" y1="54.8" x2="753.64" y2="631.8" stroke="#2b2e2b" stroke-width="1.9"/><line x1="146.6" y1="516.4" x2="1013.8" y2="516.4" stroke="#2b2e2b" stroke-width="1.9"/><line x1="840.36" y1="54.8" x2="840.36" y2="631.8" stroke="#2b2e2b" stroke-width="1.9"/><line x1="146.6" y1="574.1" x2="1013.8" y2="574.1" stroke="#2b2e2b" stroke-width="1.9"/><line x1="927.08" y1="54.8" x2="927.08" y2="631.8" stroke="#2b2e2b" stroke-width="1.9"/><rect x="146.6" y="54.8" width="867.2" height="577" fill="none" stroke="#8d908c" stroke-width="1.3"/><path d="M574.7 54.8L585.7 54.8L580.2 61.3Z" fill="#b8bab6"/><path d="M574.7 631.8L585.7 631.8L580.2 625.3Z" fill="#b8bab6"/></svg>
<div class="t" style="left:145.6px;width:200px;margin-left:-200px;text-align:right;top:48.71px;font-size:11.8px;line-height:11.8px;color:#e4e4e4;font-weight:bold;letter-spacing:0.05px;">0.0</div>
<div class="t" style="left:145.6px;width:200px;margin-left:-200px;text-align:right;top:106.41px;font-size:11.8px;line-height:11.8px;color:#e4e4e4;font-weight:bold;letter-spacing:0.05px;">-10.0</div>
<div class="t" style="left:145.6px;width:200px;margin-left:-200px;text-align:right;top:164.11px;font-size:11.8px;line-height:11.8px;color:#e4e4e4;font-weight:bold;letter-spacing:0.05px;">-20.0</div>
<div class="t" style="left:145.6px;width:200px;margin-left:-200px;text-align:right;top:221.81px;font-size:11.8px;line-height:11.8px;color:#e4e4e4;font-weight:bold;letter-spacing:0.05px;">-30.0</div>
<div class="t" style="left:145.6px;width:200px;margin-left:-200px;text-align:right;top:279.51px;font-size:11.8px;line-height:11.8px;color:#e4e4e4;font-weight:bold;letter-spacing:0.05px;">-40.0</div>
<div class="t" style="left:145.6px;width:200px;margin-left:-200px;text-align:right;top:337.21px;font-size:11.8px;line-height:11.8px;color:#e4e4e4;font-weight:bold;letter-spacing:0.05px;">-50.0</div>
<div class="t" style="left:145.6px;width:200px;margin-left:-200px;text-align:right;top:394.91px;font-size:11.8px;line-height:11.8px;color:#e4e4e4;font-weight:bold;letter-spacing:0.05px;">-60.0</div>
<div class="t" style="left:145.6px;width:200px;margin-left:-200px;text-align:right;top:452.61px;font-size:11.8px;line-height:11.8px;color:#e4e4e4;font-weight:bold;letter-spacing:0.05px;">-70.0</div>
<div class="t" style="left:145.6px;width:200px;margin-left:-200px;text-align:right;top:510.31px;font-size:11.8px;line-height:11.8px;color:#e4e4e4;font-weight:bold;letter-spacing:0.05px;">-80.0</div>
<div class="t" style="left:145.6px;width:200px;margin-left:-200px;text-align:right;top:568.01px;font-size:11.8px;line-height:11.8px;color:#e4e4e4;font-weight:bold;letter-spacing:0.05px;">-90.0</div>
<div class="t" style="left:145.6px;width:200px;margin-left:-200px;text-align:right;top:625.71px;font-size:11.8px;line-height:11.8px;color:#e4e4e4;font-weight:bold;letter-spacing:0.05px;">-100.0</div>
<div class="t" style="left:146px;top:642.03px;font-size:15.8px;line-height:15.8px;color:#f4f4f4;">Start</div>
<div class="t" style="left:190px;top:642.03px;font-size:15.8px;line-height:15.8px;color:#f4f4f4;">2.4 GHz</div>
<div class="t" style="left:493.2px;top:642.03px;font-size:15.8px;line-height:15.8px;color:#f4f4f4;">Center</div>
<div class="t" style="left:552.7px;top:642.03px;font-size:15.8px;line-height:15.8px;color:#f4f4f4;">2.42 GHz</div>
<div class="t" style="left:834.5px;top:642.03px;font-size:15.8px;line-height:15.8px;color:#f4f4f4;">Stop</div>
<div class="t" style="left:878px;top:642.03px;font-size:15.8px;line-height:15.8px;color:#f4f4f4;">2.44 GHz</div>
<div class="t" style="left:146px;top:667.43px;font-size:15.8px;line-height:15.8px;color:#f4f4f4;">RBW</div>
<div class="t" style="left:191px;top:667.43px;font-size:15.8px;line-height:15.8px;color:#f4f4f4;">100 kHz</div>
<div class="t" style="left:279.5px;top:667.43px;font-size:15.8px;line-height:15.8px;color:#f4f4f4;">VBW</div>
<div class="t" style="left:323.3px;top:667.43px;font-size:15.8px;line-height:15.8px;color:#f4f4f4;">100 kHz</div>
<div class="t" style="left:493.2px;top:667.43px;font-size:15.8px;line-height:15.8px;color:#f4f4f4;">Span</div>
<div class="t" style="left:552.7px;top:667.43px;font-size:15.8px;line-height:15.8px;color:#f4f4f4;">40 MHz</div>
<div class="t" style="left:834.5px;top:667.43px;font-size:15.8px;line-height:15.8px;color:#f4f4f4;">SWT</div>
<div class="t" style="left:878px;top:667.43px;font-size:15.8px;line-height:15.8px;color:#f4f4f4;">30 ms</div>
<div class="dia" style="left:133.2px;top:671.2px"></div>
<div class="dia" style="left:822.2px;top:671.7px"></div>
<div style="left:1013.8px;top:27px;width:8.4px;height:800px;background:#000;"></div>
<div style="left:1022.2px;top:-20px;width:160.8px;height:72.7px;background:#1b1e1c;"></div>
<div class="dot" style="left:1027.4px;top:12.9px"></div>
<div class="dot" style="left:1027.4px;top:23.1px"></div>
<div class="dot" style="left:1027.4px;top:33.3px"></div>
<div class="t" style="left:1102.6px;width:400px;margin-left:-200px;text-align:center;top:19.31px;font-size:17px;line-height:17px;color:#f4f4f4;font-weight:bold;letter-spacing:0.3px;">Frequency</div>
<div style="left:1022.2px;top:54.5px;width:160.8px;height:74.2px;background:#1f4f92;"></div>
<div style="left:1022.2px;top:130.3px;width:160.8px;height:73.8px;background:#1a1c19;"></div>
<div style="left:1022.2px;top:206.2px;width:160.8px;height:74.4px;background:#1a1c19;"></div>
<div style="left:1022.2px;top:282.8px;width:160.8px;height:72.9px;background:#1a1c19;"></div>
<div style="left:1022.2px;top:358.2px;width:160.8px;height:73.5px;background:#1a1c19;"></div>
<div style="left:1022.2px;top:434.4px;width:160.8px;height:73.5px;background:#1a1c19;"></div>
<div style="left:1022.2px;top:510.2px;width:160.8px;height:73.5px;background:#1a1c19;"></div>
<div style="left:1022.2px;top:585.9px;width:160.8px;height:74px;background:#1a1c19;"></div>
<div style="left:1022.2px;top:662px;width:160.8px;height:40px;background:#111410;"></div>
<div class="t" style="left:1102.6px;width:400px;margin-left:-200px;text-align:center;top:70.85px;font-size:16.6px;line-height:16.6px;color:#f4f4f4;font-weight:bold;letter-spacing:0.65px;">Center Freq</div>
<div class="t" style="left:1102.6px;width:400px;margin-left:-200px;text-align:center;top:101.99px;font-size:15.6px;line-height:15.6px;color:#f4f4f4;letter-spacing:-0.35px;">2.42 GHz</div>
<div class="t" style="left:1102.6px;width:400px;margin-left:-200px;text-align:center;top:146.75px;font-size:16.6px;line-height:16.6px;color:#f4f4f4;font-weight:bold;letter-spacing:0.65px;">Start Freq</div>
<div class="t" style="left:1102.6px;width:400px;margin-left:-200px;text-align:center;top:177.99px;font-size:15.6px;line-height:15.6px;color:#f4f4f4;letter-spacing:-0.35px;">2.4 GHz</div>
<div class="t" style="left:1102.6px;width:400px;margin-left:-200px;text-align:center;top:223.25px;font-size:16.6px;line-height:16.6px;color:#f4f4f4;font-weight:bold;letter-spacing:0.65px;">Stop Freq</div>
<div class="t" style="left:1102.6px;width:400px;margin-left:-200px;text-align:center;top:253.99px;font-size:15.6px;line-height:15.6px;color:#f4f4f4;letter-spacing:-0.35px;">2.44 GHz</div>
<div class="t" style="left:1102.6px;width:400px;margin-left:-200px;text-align:center;top:298.75px;font-size:16.6px;line-height:16.6px;color:#f4f4f4;font-weight:bold;letter-spacing:0.65px;">Freq Offset</div>
<div class="t" style="left:1102.6px;width:400px;margin-left:-200px;text-align:center;top:329.99px;font-size:15.6px;line-height:15.6px;color:#f4f4f4;">0 Hz</div>
<div class="t" style="left:1102.6px;width:400px;margin-left:-200px;text-align:center;top:363.95px;font-size:16.6px;line-height:16.6px;color:#f4f4f4;font-weight:bold;letter-spacing:0.65px;">Freq Step</div>
<div class="t" style="left:1102.6px;width:400px;margin-left:-200px;text-align:center;top:388.09px;font-size:15.6px;line-height:15.6px;color:#f4f4f4;">4 MHz</div>
<div style="left:1022.2px;top:404.6px;width:160.8px;height:21.4px;background:#111211;box-sizing:border-box;border-top:1.3px solid #3b3d3a;border-bottom:1.3px solid #3b3d3a;"></div>
<div style="left:1022.2px;top:404.6px;width:81.1px;height:21.4px;background:#4a8fc7;box-sizing:border-box;border:1.6px solid #18c4f2;"></div>
<div class="t" style="left:1062.75px;width:400px;margin-left:-200px;text-align:center;top:408.55px;font-size:14px;line-height:14px;color:#1a2838;">Auto</div>
<div class="t" style="left:1143.15px;width:400px;margin-left:-200px;text-align:center;top:408.38px;font-size:14.2px;line-height:14.2px;color:#f0f0f0;">Manual</div>
<div class="t" style="left:1102.6px;width:400px;margin-left:-200px;text-align:center;top:450.35px;font-size:16.6px;line-height:16.6px;color:#f4f4f4;font-weight:bold;letter-spacing:0.65px;">Signal Track</div>
<div style="left:1023px;top:480.6px;width:80.3px;height:20.4px;background:#111211;box-sizing:border-box;border:1.3px solid #3b3d3a;"></div>
<div style="left:1103.3px;top:480.4px;width:79.7px;height:20.8px;background:#4a8fc7;box-sizing:border-box;border:1.6px solid #18c4f2;"></div>
<div class="t" style="left:1062.75px;width:400px;margin-left:-200px;text-align:center;top:483.55px;font-size:14px;line-height:14px;color:#f0f0f0;">On</div>
<div class="t" style="left:1143.15px;width:400px;margin-left:-200px;text-align:center;top:483.55px;font-size:14px;line-height:14px;color:#1a2838;">Off</div>
<div class="t" style="left:1102.6px;width:400px;margin-left:-200px;text-align:center;top:538.25px;font-size:16.6px;line-height:16.6px;color:#f4f4f4;font-weight:bold;letter-spacing:0.65px;">Peak<svg width="17" height="10" viewBox="0 0 17 10" style="display:inline-block;vertical-align:-1.2px;margin:0 0.3px"><path d="M0.5 5H12" stroke="#f4f4f4" stroke-width="1.5"/><path d="M10 1.6L16.6 5L10 8.4Z" fill="#f4f4f4"/></svg>CF</div>
<div class="t" style="left:1102.6px;width:400px;margin-left:-200px;text-align:center;top:614.25px;font-size:16.6px;line-height:16.6px;color:#f4f4f4;font-weight:bold;letter-spacing:0.65px;">CF<svg width="17" height="10" viewBox="0 0 17 10" style="display:inline-block;vertical-align:-1.2px;margin:0 0.3px"><path d="M0.5 5H12" stroke="#f4f4f4" stroke-width="1.5"/><path d="M10 1.6L16.6 5L10 8.4Z" fill="#f4f4f4"/></svg>Step</div>
<div class="t" style="left:1102.6px;width:400px;margin-left:-200px;text-align:center;top:668.49px;font-size:17.5px;line-height:17.5px;color:#f4f4f4;letter-spacing:0.7px;">Local</div>
<svg style="position:absolute;left:0;top:0;overflow:visible" width="1200" height="700"><polyline points="146.6,477.14 147.69,479.13 148.77,461.64 149.86,471.55 150.94,449.35 152.03,492.91 153.11,477.32 154.2,475.53 155.28,484.81 156.37,453.13 157.45,467.11 158.54,472.2 159.62,480.66 160.71,469.3 161.79,492.69 162.88,458.12 163.97,475.89 165.05,460.37 166.14,457.3 167.22,463.13 168.31,461.38 169.39,491.61 170.48,463.71 171.56,474.49 172.65,464.06 173.73,481.74 174.82,464.15 175.9,478.94 176.99,478.6 178.08,455.99 179.16,485.87 180.25,464.88 181.33,470.17 182.42,467.87 183.5,459.72 184.59,461.44 185.67,493.46 186.76,471.75 187.84,470.53 188.93,476.53 190.01,458.42 191.1,468.66 192.18,468.66 193.27,457.55 194.36,464.28 195.44,468.73 196.53,463.82 197.61,464.56 198.7,464.26 199.78,496.45 200.87,446.45 201.95,468.8 203.04,456.83 204.12,478.22 205.21,477.37 206.29,459.44 207.38,461.83 208.47,480.34 209.55,461.95 210.64,472.47 211.72,468.51 212.81,471.76 213.89,463.08 214.98,474.36 216.06,477.29 217.15,467.61 218.23,459.52 219.32,469.89 220.4,443.66 221.49,455.53 222.57,455.69 223.66,464.09 224.75,461.77 225.83,467.22 226.92,466.46 228,477.03 229.09,473.75 230.17,458.09 231.26,449.23 232.34,466.56 233.43,456.97 234.51,469.95 235.6,498.99 236.68,479.16 237.77,465.78 238.86,454.44 239.94,447.85 241.03,462.14 242.11,460.65 243.2,474.87 244.28,470.13 245.37,452.87 246.45,480.44 247.54,469.63 248.62,463.83 249.71,474.46 250.79,451.89 251.88,481.02 252.96,453.32 254.05,461.7 255.14,457.7 256.22,482.52 257.31,463.85 258.39,482.79 259.48,469 260.56,464.88 261.65,458.38 262.73,480 263.82,483.58 264.9,472.05 265.99,459.2 267.07,461.7 268.16,454.99 269.25,470.46 270.33,478.51 271.42,475 272.5,462.03 273.59,466.93 274.67,465.39 275.76,462.54 276.84,479.07 277.93,462.16 279.01,489.91 280.1,463.65 281.18,472.79 282.27,452.42 283.35,461.72 284.44,469.96 285.53,456.78 286.61,473.09 287.7,470.11 288.78,457.04 289.87,476.42 290.95,473.25 292.04,473.24 293.12,465.97 294.21,470.4 295.29,461.99 296.38,459.73 297.46,479.98 298.55,469.2 299.64,477.96 300.72,477.69 301.81,468.39 302.89,474.33 303.98,466.31 305.06,466.8 306.15,451.54 307.23,470 308.32,492.78 309.4,480.31 310.49,477.3 311.57,486 312.66,470.62 313.74,462.45 314.83,469.25 315.92,470.3 317,470.17 318.09,469.77 319.17,461.6 320.26,466.2 321.34,473.15 322.43,440.72 323.51,478.29 324.6,462.97 325.68,476.46 326.77,480.55 327.85,466.71 328.94,466.88 330.03,468.85 331.11,488.09 332.2,467.24 333.28,439.59 334.37,470.35 335.45,456.56 336.54,440.76 337.62,462.57 338.71,458.83 339.79,453.49 340.88,482.32 341.96,459.87 343.05,454.12 344.13,484.98 345.22,467.2 346.31,467.56 347.39,483.9 348.48,453.4 349.56,465.26 350.65,470.55 351.73,476.31 352.82,464.33 353.9,461.87 354.99,470.21 356.07,472.97 357.16,455.7 358.24,487.85 359.33,471.95 360.42,465.91 361.5,466.19 362.59,471.4 363.67,468.95 364.76,466.74 365.84,464.72 366.93,452.21 368.01,475.72 369.1,466.82 370.18,453.41 371.27,456.83 372.35,440.24 373.44,454.44 374.52,468.59 375.61,461.77 376.7,489.08 377.78,457.21 378.87,466.15 379.95,462.04 381.04,480.31 382.12,453.73 383.21,462.65 384.29,467.55 385.38,457.65 386.46,492.74 387.55,464.18 388.63,476.62 389.72,462.29 390.81,470.45 391.89,465.66 392.98,451.45 394.06,474.86 395.15,481.5 396.23,475.68 397.32,483.25 398.4,472.37 399.49,464.23 400.57,445.21 401.66,477.87 402.74,459.98 403.83,484.78 404.91,492.54 406,446.14 407.09,456.26 408.17,462.18 409.26,472.92 410.34,459.16 411.43,446.33 412.51,472.4 413.6,477.02 414.68,456.83 415.77,495.25 416.85,463.13 417.94,485.64 419.02,454.8 420.11,482.29 421.2,436.58 422.28,459.03 423.37,477.63 424.45,461.03 425.54,464.2 426.62,469.07 427.71,469.1 428.79,468.28 429.88,461.61 430.96,477.16 432.05,479.93 433.13,478.14 434.22,462.14 435.3,478.98 436.39,466.53 437.48,468.18 438.56,460.44 439.65,438.42 440.73,464.66 441.82,455.19 442.9,461.08 443.99,479.91 445.07,488.7 446.16,483.96 447.24,449.83 448.33,464.18 449.41,464.13 450.5,467.57 451.59,455.02 452.67,473.11 453.76,468.48 454.84,473.83 455.93,442.49 457.01,462.28 458.1,465.59 459.18,471.05 460.27,460.93 461.35,474.05 462.44,453.88 463.52,453.74 464.61,463.75 465.69,474.61 466.78,464.91 467.87,472.01 468.95,449.77 470.04,459.14 471.12,462.32 472.21,463.11 473.29,475.72 474.38,483.76 475.46,476.12 476.55,488.34 477.63,451.31 478.72,459.19 479.8,441.77 480.89,461.12 481.98,471.03 483.06,470.97 484.15,479.75 485.23,488.41 486.32,456.61 487.4,476.05 488.49,478.36 489.57,460.17 490.66,466.11 491.74,476.96 492.83,454.64 493.91,481.54 495,471.14 496.08,470.19 497.17,460.03 498.26,494.99 499.34,453.35 500.43,466.24 501.51,472.89 502.6,470.05 503.68,486.71 504.77,449.76 505.85,483.34 506.94,479.25 508.02,471.58 509.11,478.9 510.19,473.53 511.28,471.74 512.37,464.46 513.45,455.62 514.54,481.89 515.62,452.83 516.71,468.57 517.79,459.79 518.88,486.36 519.96,463.2 521.05,472.81 522.13,462.98 523.22,471.01 524.3,466.83 525.39,478.1 526.47,461.76 527.56,471.96 528.65,455.54 529.73,460.93 530.82,478.69 531.9,464.78 532.99,462.97 534.07,486.36 535.16,472.86 536.24,465.5 537.33,457.47 538.41,480.88 539.5,465.42 540.58,463.26 541.67,451.24 542.76,474.94 543.84,481.64 544.93,478.23 546.01,495.92 547.1,476.34 548.18,467.83 549.27,457.8 550.35,478.84 551.44,456.1 552.52,456.54 553.61,476.47 554.69,446.71 555.78,462.75 556.86,482.13 557.95,487.02 559.04,466.2 560.12,458.46 561.21,469.66 562.29,465.44 563.38,477.45 564.46,455.86 565.55,460.34 566.63,491.66 567.72,484.92 568.8,471.21 569.89,470.04 570.97,446.77 572.06,495.53 573.15,457.92 574.23,436.41 575.32,478.17 576.4,465.33 577.49,470.94 578.57,454.5 579.66,464.35 580.74,462.18 581.83,476.15 582.91,446.96 584,472.76 585.08,477.3 586.17,481.36 587.25,472.37 588.34,454.58 589.43,454.18 590.51,464.66 591.6,482.57 592.68,455.75 593.77,476.82 594.85,469.61 595.94,480.19 597.02,468.75 598.11,491.16 599.19,453.41 600.28,464.32 601.36,455.3 602.45,457.68 603.54,455.45 604.62,439.77 605.71,464.45 606.79,473.28 607.88,473.01 608.96,466.46 610.05,453.4 611.13,476.2 612.22,463.05 613.3,455.65 614.39,469.7 615.47,477.29 616.56,461.92 617.64,477.42 618.73,486.23 619.82,447.25 620.9,469.05 621.99,465.61 623.07,494.52 624.16,457.21 625.24,458 626.33,458.46 627.41,470.99 628.5,467.36 629.58,436.84 630.67,474.58 631.75,476.18 632.84,469.15 633.93,448.23 635.01,466.97 636.1,453.41 637.18,458.09 638.27,451.25 639.35,458.8 640.44,456.72 641.52,454.64 642.61,452.38 643.69,450.48 644.78,445.94 645.86,440.75 646.95,435.48 648.03,425.51 649.12,415.53 650.21,399.1 651.29,368.78 652.38,335.99 653.46,317.09 654.55,298.19 655.63,283.12 656.72,275.7 657.8,272.01 658.89,270.08 659.97,266.77 661.06,266.78 662.14,263.54 663.23,250.97 664.32,264.82 665.4,260.33 666.49,276.74 667.57,265.11 668.66,274.21 669.74,260.1 670.83,269.59 671.91,261.02 673,262.5 674.08,261.97 675.17,269.55 676.25,269.77 677.34,273.25 678.42,291.82 679.51,310.72 680.6,329.61 681.68,358.92 682.77,406.02 683.85,425.51 684.94,441.25 686.02,466.4 687.11,465.01 688.19,458.22 689.28,459.36 690.36,456.61 691.45,479.94 692.53,473.52 693.62,467.26 694.71,463.8 695.79,458.8 696.88,469.03 697.96,467.9 699.05,465.4 700.13,471.39 701.22,471.98 702.3,456.35 703.39,468.3 704.47,477.25 705.56,475.5 706.64,446.44 707.73,451.17 708.81,449.35 709.9,467.49 710.99,468.85 712.07,471.93 713.16,469.13 714.24,462.29 715.33,478.2 716.41,461.39 717.5,496.04 718.58,475.81 719.67,497.81 720.75,456.63 721.84,469.21 722.92,452.68 724.01,487.77 725.1,471.57 726.18,468.91 727.27,464.03 728.35,485.31 729.44,478.21 730.52,468.22 731.61,486.79 732.69,478.44 733.78,461.93 734.86,464.31 735.95,468.83 737.03,483.41 738.12,459.23 739.2,458 740.29,454.33 741.38,463.62 742.46,491.71 743.55,448.88 744.63,446.47 745.72,456.41 746.8,478.13 747.89,459.39 748.97,461.55 750.06,477.89 751.14,471.46 752.23,461.91 753.31,462.78 754.4,470.18 755.49,441.75 756.57,449.86 757.66,450.4 758.74,455.67 759.83,471.94 760.91,484.09 762,485.04 763.08,468.74 764.17,487.42 765.25,468 766.34,466.62 767.42,462.3 768.51,452.34 769.59,490.16 770.68,494.5 771.77,462.03 772.85,483.55 773.94,479.18 775.02,466.89 776.11,474.81 777.19,459.51 778.28,478.55 779.36,455.89 780.45,482.59 781.53,452.74 782.62,468.87 783.7,467.95 784.79,470.41 785.88,484.68 786.96,451.21 788.05,460.14 789.13,474.74 790.22,471.31 791.3,456.96 792.39,464.78 793.47,474.04 794.56,473.86 795.64,470.56 796.73,450.96 797.81,478.91 798.9,472.56 799.98,483.11 801.07,471.01 802.16,457.58 803.24,486.06 804.33,467.12 805.41,474.24 806.5,489.44 807.58,457.23 808.67,478.23 809.75,465.07 810.84,491.81 811.92,486.75 813.01,472.07 814.09,475.28 815.18,469.3 816.27,475.59 817.35,455.64 818.44,473.38 819.52,468.55 820.61,457.74 821.69,477.71 822.78,468.75 823.86,460.36 824.95,459.55 826.03,480.04 827.12,462.67 828.2,462.18 829.29,459.77 830.37,466.54 831.46,458.37 832.55,475.22 833.63,465.8 834.72,478.33 835.8,465.19 836.89,458.08 837.97,463.68 839.06,463.76 840.14,467.55 841.23,467.09 842.31,475.36 843.4,468.38 844.48,465.21 845.57,451.44 846.66,470.98 847.74,464.76 848.83,449.71 849.91,438.3 851,490.31 852.08,473.63 853.17,485.35 854.25,479.45 855.34,458.78 856.42,476.78 857.51,487.19 858.59,456.25 859.68,451.98 860.76,476.96 861.85,470.1 862.94,459.42 864.02,464.04 865.11,476.1 866.19,462.62 867.28,480.1 868.36,458.15 869.45,474.48 870.53,470 871.62,466.56 872.7,456.43 873.79,456.3 874.87,472.51 875.96,474.14 877.05,481.45 878.13,470.66 879.22,483.88 880.3,460.61 881.39,482.27 882.47,468.72 883.56,471.31 884.64,479.25 885.73,455.6 886.81,460.78 887.9,490.52 888.98,463.99 890.07,467.26 891.15,460.39 892.24,483.36 893.33,468.99 894.41,462.57 895.5,476.12 896.58,475.96 897.67,461.64 898.75,467.55 899.84,464.29 900.92,449.23 902.01,462.95 903.09,472.49 904.18,458.05 905.26,466.49 906.35,496.45 907.44,474.26 908.52,468.89 909.61,475.16 910.69,471.91 911.78,472.31 912.86,476.13 913.95,472.21 915.03,468.14 916.12,461.71 917.2,459.76 918.29,479.02 919.37,441.54 920.46,464.83 921.54,475.33 922.63,499.44 923.72,468.68 924.8,483.8 925.89,461.49 926.97,458.72 928.06,457.14 929.14,474.53 930.23,472.81 931.31,490.55 932.4,452.89 933.48,486.96 934.57,470.25 935.65,466.62 936.74,487.96 937.83,460.03 938.91,474.34 940,461.96 941.08,478.95 942.17,464.76 943.25,469.17 944.34,483.07 945.42,465.66 946.51,479.41 947.59,471.3 948.68,439.78 949.76,476.4 950.85,458.35 951.93,458.26 953.02,476.81 954.11,470.3 955.19,462.6 956.28,459.34 957.36,495.28 958.45,448.87 959.53,475.33 960.62,475.06 961.7,466.3 962.79,462.45 963.87,468.52 964.96,458.86 966.04,475.18 967.13,464.97 968.22,454.56 969.3,461.72 970.39,452.13 971.47,475.16 972.56,464.47 973.64,460 974.73,445.62 975.81,474.47 976.9,463.35 977.98,462.9 979.07,459.13 980.15,456.02 981.24,455.92 982.32,469.83 983.41,473.29 984.5,489.64 985.58,463.03 986.67,474.77 987.75,469.79 988.84,454.61 989.92,464.27 991.01,473.73 992.09,463.61 993.18,456.58 994.26,482.55 995.35,454.76 996.43,470.91 997.52,473.49 998.61,463.24 999.69,487.1 1000.78,483.59 1001.86,471.18 1002.95,481.68 1004.03,475.54 1005.12,472.3 1006.2,464.9 1007.29,450.09 1008.37,460.59 1009.46,455.03 1010.54,445.06 1011.63,459.08 1012.71,467.32 1013.8,461.39" fill="none" stroke="#f0f000" stroke-width="1" shape-rendering="crispEdges"/></svg>
<svg style="position:absolute;left:0;top:0;overflow:visible" width="10" height="10"><path d="M1008.25 484.31L1019.96 484.31L1014.1 491.02Z" fill="#f21e12"/><ellipse cx="1014.1" cy="478.73" rx="10.65" ry="9.29" fill="#f21e12"/><ellipse cx="1013.1" cy="479.23" rx="1.3" ry="1.8" fill="#200"/></svg>
<div style="left:3.19px;top:-2.75px;width:1182.04px;height:11.79px;background:#4f514f;"></div>
<div style="left:1183.22px;top:-2.75px;width:2.01px;height:704.39px;background:#4f514f;"></div>
<div style="left:1185.23px;top:-2.75px;width:13.06px;height:704.39px;background:#a5a5a5;"></div>
</div></div>
<div class="clip" style="left:0px;top:697px;width:1175px;height:684px"><div class="pn" style="transform:translate(-3.2px,-8.28px) scale(0.99862,1.00503)">
<div style="left:-20px;top:-20px;width:1300px;height:800px;background:#000;"></div>
<div style="left:-20px;top:-20px;width:1042.2px;height:47px;background:#1a1d1b;"></div>
<svg style="position:absolute;left:14.5px;top:8.1px" width="95.8" height="15.1" viewBox="120 45 2130 340" preserveAspectRatio="none"><g fill="none" stroke="#f8f8f8" stroke-width="80"><path d="M420 89H215Q164 89 164 140V163Q164 214 215 214H325Q376 214 376 265V290Q376 341 325 341H130"/><path d="M515 45V385"/><path d="M960 89H725Q654 89 654 160V270Q654 341 725 341H916V214H750"/><path d="M1044 45V341H1300"/><path d="M1535 89H1385Q1290 89 1290 184V246Q1290 341 1385 341H1535M1330 214H1520"/><path d="M1624 385V45M1624 60L1836 370M1836 385V45"/><path d="M1930 89H2250M2084 89V385"/></g></svg>
<div class="t" style="left:593.5px;width:400px;margin-left:-200px;text-align:center;top:6.93px;font-size:16.5px;line-height:16.5px;color:#f4f4f4;">2020-05-20 17:40:18</div>
<svg style="position:absolute;left:995px;top:4px;overflow:visible;z-index:5" width="22" height="22" viewBox="0 0 22 22"><g fill="none" stroke="#1a9ae0" stroke-width="2"><rect x="7.2" y="1.5" width="5.6" height="5.2"/><path d="M10 6.7V10.6M3.5 14V10.6H16.5V14"/><rect x="1.2" y="14" width="5.6" height="5.8"/><rect x="13.2" y="14" width="5.6" height="5.8"/></g></svg>
<div class="t" style="left:15.6px;top:51.75px;font-size:16.6px;line-height:16.6px;color:#f4f4f4;transform:scaleX(0.925);transform-origin:0 0;">Log</div>
<div class="t" style="left:15.6px;top:80.75px;font-size:16.6px;line-height:16.6px;color:#f4f4f4;transform:scaleX(0.925);transform-origin:0 0;">10 dB</div>
<div class="t" style="left:15.6px;top:166.95px;font-size:16.6px;line-height:16.6px;color:#f4f4f4;transform:scaleX(0.925);transform-origin:0 0;">Free</div>
<div class="t" style="left:15.6px;top:195.75px;font-size:16.6px;line-height:16.6px;color:#f4f4f4;transform:scaleX(0.925);transform-origin:0 0;">LgPwr</div>
<div class="t" style="left:15.6px;top:224.25px;font-size:16.6px;line-height:16.6px;color:#f4f4f4;transform:scaleX(0.925);transform-origin:0 0;">Cont</div>
<div class="t" style="left:21.3px;top:395.99px;font-size:15.6px;line-height:15.6px;color:#e8e800;font-weight:bold;">A</div>
<div class="t" style="left:44.6px;top:395.99px;font-size:15.6px;line-height:15.6px;color:#e8e800;">C&amp;W</div>
<div class="t" style="left:44.6px;top:426.09px;font-size:15.6px;line-height:15.6px;color:#e8e800;">P-PK</div>
<div class="t" style="left:21.3px;top:459.09px;font-size:15.6px;line-height:15.6px;color:#1e1f1c;">B</div>
<div class="t" style="left:44.6px;top:459.09px;font-size:15.6px;line-height:15.6px;color:#1e1f1c;">Blank</div>
<div class="t" style="left:44.6px;top:489.59px;font-size:15.6px;line-height:15.6px;color:#1e1f1c;">P-PK</div>
<div class="t" style="left:21.3px;top:523.09px;font-size:15.6px;line-height:15.6px;color:#1e1f1c;">C</div>
<div class="t" style="left:44.6px;top:523.09px;font-size:15.6px;line-height:15.6px;color:#1e1f1c;">Blank</div>
<div class="t" style="left:44.6px;top:553.59px;font-size:15.6px;line-height:15.6px;color:#1e1f1c;">P-PK</div>
<div class="t" style="left:21.3px;top:586.29px;font-size:15.6px;line-height:15.6px;color:#1e1f1c;">D</div>
<div class="t" style="left:44.6px;top:586.29px;font-size:15.6px;line-height:15.6px;color:#1e1f1c;">Blank</div>
<div class="t" style="left:44.6px;top:616.79px;font-size:15.6px;line-height:15.6px;color:#1e1f1c;">P-PK</div>
<div class="t" style="left:146px;top:34.79px;font-size:15.6px;line-height:15.6px;color:#f4f4f4;font-weight:bold;">Ref</div>
<div class="t" style="left:184.6px;top:34.79px;font-size:15.6px;line-height:15.6px;color:#f4f4f4;">0 dBm</div>
<div class="t" style="left:382px;top:34.79px;font-size:15.6px;line-height:15.6px;color:#f4f4f4;font-weight:bold;">Att</div>
<div class="t" style="left:415.5px;top:34.79px;font-size:15.6px;line-height:15.6px;color:#f4f4f4;">20 dB</div>
<svg style="position:absolute;left:0;top:0;overflow:visible" width="1200" height="700"><line x1="146.6" y1="112.5" x2="1013.8" y2="112.5" stroke="#2b2e2b" stroke-width="1.9"/><line x1="233.32" y1="54.8" x2="233.32" y2="631.8" stroke="#2b2e2b" stroke-width="1.9"/><line x1="146.6" y1="170.2" x2="1013.8" y2="170.2" stroke="#2b2e2b" stroke-width="1.9"/><line x1="320.04" y1="54.8" x2="320.04" y2="631.8" stroke="#2b2e2b" stroke-width="1.9"/><line x1="146.6" y1="227.9" x2="1013.8" y2="227.9" stroke="#2b2e2b" stroke-width="1.9"/><line x1="406.76" y1="54.8" x2="406.76" y2="631.8" stroke="#2b2e2b" stroke-width="1.9"/><line x1="146.6" y1="285.6" x2="1013.8" y2="285.6" stroke="#2b2e2b" stroke-width="1.9"/><line x1="493.48" y1="54.8" x2="493.48" y2="631.8" stroke="#2b2e2b" stroke-width="1.9"/><line x1="146.6" y1="343.3" x2="1013.8" y2="343.3" stroke="#2b2e2b" stroke-width="1.9"/><line x1="580.2" y1="54.8" x2="580.2" y2="631.8" stroke="#2b2e2b" stroke-width="1.9"/><line x1="146.6" y1="401" x2="1013.8" y2="401" stroke="#2b2e2b" stroke-width="1.9"/><line x1="666.92" y1="54.8" x2="666.92" y2="631.8" stroke="#2b2e2b" stroke-width="1.9"/><line x1="146.6" y1="458.7" x2="1013.8" y2="458.7" stroke="#2b2e2b" stroke-width="1.9"/><line x1="753.64" y1="54.8" x2="753.64" y2="631.8" stroke="#2b2e2b" stroke-width="1.9"/><line x1="146.6" y1="516.4" x2="1013.8" y2="516.4" stroke="#2b2e2b" stroke-width="1.9"/><line x1="840.36" y1="54.8" x2="840.36" y2="631.8" stroke="#2b2e2b" stroke-width="1.9"/><line x1="146.6" y1="574.1" x2="1013.8" y2="574.1" stroke="#2b2e2b" stroke-width="1.9"/><line x1="927.08" y1="54.8" x2="927.08" y2="631.8" stroke="#2b2e2b" stroke-width="1.9"/><rect x="146.6" y="54.8" width="867.2" height="577" fill="none" stroke="#8d908c" stroke-width="1.3"/><path d="M574.7 54.8L585.7 54.8L580.2 61.3Z" fill="#b8bab6"/><path d="M574.7 631.8L585.7 631.8L580.2 625.3Z" fill="#b8bab6"/></svg>
<div class="t" style="left:145.6px;width:200px;margin-left:-200px;text-align:right;top:48.71px;font-size:11.8px;line-height:11.8px;color:#e4e4e4;font-weight:bold;letter-spacing:0.05px;">0.0</div>
<div class="t" style="left:145.6px;width:200px;margin-left:-200px;text-align:right;top:106.41px;font-size:11.8px;line-height:11.8px;color:#e4e4e4;font-weight:bold;letter-spacing:0.05px;">-10.0</div>
<div class="t" style="left:145.6px;width:200px;margin-left:-200px;text-align:right;top:164.11px;font-size:11.8px;line-height:11.8px;color:#e4e4e4;font-weight:bold;letter-spacing:0.05px;">-20.0</div>
<div class="t" style="left:145.6px;width:200px;margin-left:-200px;text-align:right;top:221.81px;font-size:11.8px;line-height:11.8px;color:#e4e4e4;font-weight:bold;letter-spacing:0.05px;">-30.0</div>
<div class="t" style="left:145.6px;width:200px;margin-left:-200px;text-align:right;top:279.51px;font-size:11.8px;line-height:11.8px;color:#e4e4e4;font-weight:bold;letter-spacing:0.05px;">-40.0</div>
<div class="t" style="left:145.6px;width:200px;margin-left:-200px;text-align:right;top:337.21px;font-size:11.8px;line-height:11.8px;color:#e4e4e4;font-weight:bold;letter-spacing:0.05px;">-50.0</div>
<div class="t" style="left:145.6px;width:200px;margin-left:-200px;text-align:right;top:394.91px;font-size:11.8px;line-height:11.8px;color:#e4e4e4;font-weight:bold;letter-spacing:0.05px;">-60.0</div>
<div class="t" style="left:145.6px;width:200px;margin-left:-200px;text-align:right;top:452.61px;font-size:11.8px;line-height:11.8px;color:#e4e4e4;font-weight:bold;letter-spacing:0.05px;">-70.0</div>
<div class="t" style="left:145.6px;width:200px;margin-left:-200px;text-align:right;top:510.31px;font-size:11.8px;line-height:11.8px;color:#e4e4e4;font-weight:bold;letter-spacing:0.05px;">-80.0</div>
<div class="t" style="left:145.6px;width:200px;margin-left:-200px;text-align:right;top:568.01px;font-size:11.8px;line-height:11.8px;color:#e4e4e4;font-weight:bold;letter-spacing:0.05px;">-90.0</div>
<div class="t" style="left:145.6px;width:200px;margin-left:-200px;text-align:right;top:625.71px;font-size:11.8px;line-height:11.8px;color:#e4e4e4;font-weight:bold;letter-spacing:0.05px;">-100.0</div>
<div class="t" style="left:146px;top:642.03px;font-size:15.8px;line-height:15.8px;color:#f4f4f4;">Start</div>
<div class="t" style="left:190px;top:642.03px;font-size:15.8px;line-height:15.8px;color:#f4f4f4;">2.4 GHz</div>
<div class="t" style="left:493.2px;top:642.03px;font-size:15.8px;line-height:15.8px;color:#f4f4f4;">Center</div>
<div class="t" style="left:552.7px;top:642.03px;font-size:15.8px;line-height:15.8px;color:#f4f4f4;">2.42 GHz</div>
<div class="t" style="left:834.5px;top:642.03px;font-size:15.8px;line-height:15.8px;color:#f4f4f4;">Stop</div>
<div class="t" style="left:878px;top:642.03px;font-size:15.8px;line-height:15.8px;color:#f4f4f4;">2.44 GHz</div>
<div class="t" style="left:146px;top:667.43px;font-size:15.8px;line-height:15.8px;color:#f4f4f4;">RBW</div>
<div class="t" style="left:191px;top:667.43px;font-size:15.8px;line-height:15.8px;color:#f4f4f4;">100 kHz</div>
<div class="t" style="left:279.5px;top:667.43px;font-size:15.8px;line-height:15.8px;color:#f4f4f4;">VBW</div>
<div class="t" style="left:323.3px;top:667.43px;font-size:15.8px;line-height:15.8px;color:#f4f4f4;">100 kHz</div>
<div class="t" style="left:493.2px;top:667.43px;font-size:15.8px;line-height:15.8px;color:#f4f4f4;">Span</div>
<div class="t" style="left:552.7px;top:667.43px;font-size:15.8px;line-height:15.8px;color:#f4f4f4;">40 MHz</div>
<div class="t" style="left:834.5px;top:667.43px;font-size:15.8px;line-height:15.8px;color:#f4f4f4;">SWT</div>
<div class="t" style="left:878px;top:667.43px;font-size:15.8px;line-height:15.8px;color:#f4f4f4;">30 ms</div>
<div class="dia" style="left:133.2px;top:671.2px"></div>
<div class="dia" style="left:822.2px;top:671.7px"></div>
<div style="left:1013.8px;top:27px;width:8.4px;height:800px;background:#000;"></div>
<div style="left:1022.2px;top:-20px;width:160.8px;height:72.7px;background:#1b1e1c;"></div>
<div class="dot" style="left:1027.4px;top:12.9px"></div>
<div class="dot" style="left:1027.4px;top:23.1px"></div>
<div class="dot" style="left:1027.4px;top:33.3px"></div>
<div class="t" style="left:1102.6px;width:400px;margin-left:-200px;text-align:center;top:19.31px;font-size:17px;line-height:17px;color:#f4f4f4;font-weight:bold;letter-spacing:0.3px;">Frequency</div>
<div style="left:1022.2px;top:54.5px;width:160.8px;height:74.2px;background:#1f4f92;"></div>
<div style="left:1022.2px;top:130.3px;width:160.8px;height:73.8px;background:#1a1c19;"></div>
<div style="left:1022.2px;top:206.2px;width:160.8px;height:74.4px;background:#1a1c19;"></div>
<div style="left:1022.2px;top:282.8px;width:160.8px;height:72.9px;background:#1a1c19;"></div>
<div style="left:1022.2px;top:358.2px;width:160.8px;height:73.5px;background:#1a1c19;"></div>
<div style="left:1022.2px;top:434.4px;width:160.8px;height:73.5px;background:#1a1c19;"></div>
<div style="left:1022.2px;top:510.2px;width:160.8px;height:73.5px;background:#1a1c19;"></div>
<div style="left:1022.2px;top:585.9px;width:160.8px;height:74px;background:#1a1c19;"></div>
<div style="left:1022.2px;top:662px;width:160.8px;height:40px;background:#111410;"></div>
<div class="t" style="left:1102.6px;width:400px;margin-left:-200px;text-align:center;top:70.85px;font-size:16.6px;line-height:16.6px;color:#f4f4f4;font-weight:bold;letter-spacing:0.65px;">Center Freq</div>
<div class="t" style="left:1102.6px;width:400px;margin-left:-200px;text-align:center;top:101.99px;font-size:15.6px;line-height:15.6px;color:#f4f4f4;letter-spacing:-0.35px;">2.42 GHz</div>
<div class="t" style="left:1102.6px;width:400px;margin-left:-200px;text-align:center;top:146.75px;font-size:16.6px;line-height:16.6px;color:#f4f4f4;font-weight:bold;letter-spacing:0.65px;">Start Freq</div>
<div class="t" style="left:1102.6px;width:400px;margin-left:-200px;text-align:center;top:177.99px;font-size:15.6px;line-height:15.6px;color:#f4f4f4;letter-spacing:-0.35px;">2.4 GHz</div>
<div class="t" style="left:1102.6px;width:400px;margin-left:-200px;text-align:center;top:223.25px;font-size:16.6px;line-height:16.6px;color:#f4f4f4;font-weight:bold;letter-spacing:0.65px;">Stop Freq</div>
<div class="t" style="left:1102.6px;width:400px;margin-left:-200px;text-align:center;top:253.99px;font-size:15.6px;line-height:15.6px;color:#f4f4f4;letter-spacing:-0.35px;">2.44 GHz</div>
<div class="t" style="left:1102.6px;width:400px;margin-left:-200px;text-align:center;top:298.75px;font-size:16.6px;line-height:16.6px;color:#f4f4f4;font-weight:bold;letter-spacing:0.65px;">Freq Offset</div>
<div class="t" style="left:1102.6px;width:400px;margin-left:-200px;text-align:center;top:329.99px;font-size:15.6px;line-height:15.6px;color:#f4f4f4;">0 Hz</div>
<div class="t" style="left:1102.6px;width:400px;margin-left:-200px;text-align:center;top:363.95px;font-size:16.6px;line-height:16.6px;color:#f4f4f4;font-weight:bold;letter-spacing:0.65px;">Freq Step</div>
<div class="t" style="left:1102.6px;width:400px;margin-left:-200px;text-align:center;top:388.09px;font-size:15.6px;line-height:15.6px;color:#f4f4f4;">4 MHz</div>
<div style="left:1022.2px;top:404.6px;width:160.8px;height:21.4px;background:#111211;box-sizing:border-box;border-top:1.3px solid #3b3d3a;border-bottom:1.3px solid #3b3d3a;"></div>
<div style="left:1022.2px;top:404.6px;width:81.1px;height:21.4px;background:#4a8fc7;box-sizing:border-box;border:1.6px solid #18c4f2;"></div>
<div class="t" style="left:1062.75px;width:400px;margin-left:-200px;text-align:center;top:408.55px;font-size:14px;line-height:14px;color:#1a2838;">Auto</div>
<div class="t" style="left:1143.15px;width:400px;margin-left:-200px;text-align:center;top:408.38px;font-size:14.2px;line-height:14.2px;color:#f0f0f0;">Manual</div>
<div class="t" style="left:1102.6px;width:400px;margin-left:-200px;text-align:center;top:450.35px;font-size:16.6px;line-height:16.6px;color:#f4f4f4;font-weight:bold;letter-spacing:0.65px;">Signal Track</div>
<div style="left:1023px;top:480.6px;width:80.3px;height:20.4px;background:#111211;box-sizing:border-box;border:1.3px solid #3b3d3a;"></div>
<div style="left:1103.3px;top:480.4px;width:79.7px;height:20.8px;background:#4a8fc7;box-sizing:border-box;border:1.6px solid #18c4f2;"></div>
<div class="t" style="left:1062.75px;width:400px;margin-left:-200px;text-align:center;top:483.55px;font-size:14px;line-height:14px;color:#f0f0f0;">On</div>
<div class="t" style="left:1143.15px;width:400px;margin-left:-200px;text-align:center;top:483.55px;font-size:14px;line-height:14px;color:#1a2838;">Off</div>
<div class="t" style="left:1102.6px;width:400px;margin-left:-200px;text-align:center;top:538.25px;font-size:16.6px;line-height:16.6px;color:#f4f4f4;font-weight:bold;letter-spacing:0.65px;">Peak<svg width="17" height="10" viewBox="0 0 17 10" style="display:inline-block;vertical-align:-1.2px;margin:0 0.3px"><path d="M0.5 5H12" stroke="#f4f4f4" stroke-width="1.5"/><path d="M10 1.6L16.6 5L10 8.4Z" fill="#f4f4f4"/></svg>CF</div>
<div class="t" style="left:1102.6px;width:400px;margin-left:-200px;text-align:center;top:614.25px;font-size:16.6px;line-height:16.6px;color:#f4f4f4;font-weight:bold;letter-spacing:0.65px;">CF<svg width="17" height="10" viewBox="0 0 17 10" style="display:inline-block;vertical-align:-1.2px;margin:0 0.3px"><path d="M0.5 5H12" stroke="#f4f4f4" stroke-width="1.5"/><path d="M10 1.6L16.6 5L10 8.4Z" fill="#f4f4f4"/></svg>Step</div>
<div class="t" style="left:1102.6px;width:400px;margin-left:-200px;text-align:center;top:668.49px;font-size:17.5px;line-height:17.5px;color:#f4f4f4;letter-spacing:0.7px;">Local</div>
<svg style="position:absolute;left:0;top:0;overflow:visible" width="1200" height="700"><polyline points="146.6,456.25 147.69,466.71 148.77,474.48 149.86,460.13 150.94,458.24 152.03,462.65 153.11,464.83 154.2,466.45 155.28,479.16 156.37,469.96 157.45,466.41 158.54,467.53 159.62,468.73 160.71,460.19 161.79,471.72 162.88,479.84 163.97,475.14 165.05,466.86 166.14,470.57 167.22,458.54 168.31,452.61 169.39,479.68 170.48,469.43 171.56,481.66 172.65,461.86 173.73,476.56 174.82,474.52 175.9,468.01 176.99,462.03 178.08,488.89 179.16,456.25 180.25,475.13 181.33,463.87 182.42,469.62 183.5,452.75 184.59,479.52 185.67,449.45 186.76,465.17 187.84,466.49 188.93,470.62 190.01,490.76 191.1,440.98 192.18,493.18 193.27,495.98 194.36,469.89 195.44,470.73 196.53,457.14 197.61,485.75 198.7,468.82 199.78,476.16 200.87,473.72 201.95,457.08 203.04,477.99 204.12,482.87 205.21,471.4 206.29,459.68 207.38,475.84 208.47,467.87 209.55,479.57 210.64,466.03 211.72,475.08 212.81,466.65 213.89,453.77 214.98,469.06 216.06,470.81 217.15,443.95 218.23,463.63 219.32,475.86 220.4,465.35 221.49,463.48 222.57,486.01 223.66,464.71 224.75,475.32 225.83,474.35 226.92,474.54 228,474.3 229.09,488.22 230.17,487.45 231.26,479.42 232.34,454.3 233.43,457.35 234.51,456.94 235.6,448.6 236.68,468.9 237.77,464.36 238.86,482.77 239.94,453.01 241.03,453.61 242.11,464.28 243.2,464.84 244.28,475.61 245.37,472.65 246.45,461 247.54,476.64 248.62,466.62 249.71,460.39 250.79,459.8 251.88,469 252.96,453.92 254.05,467.45 255.14,462.65 256.22,497.32 257.31,479.31 258.39,468.62 259.48,463.82 260.56,482.83 261.65,463.75 262.73,465.68 263.82,465.03 264.9,464.14 265.99,470.12 267.07,473.85 268.16,479.12 269.25,458.56 270.33,468.83 271.42,468.45 272.5,460.14 273.59,460.78 274.67,466.39 275.76,478.8 276.84,469.33 277.93,481.68 279.01,461.08 280.1,451.62 281.18,469.87 282.27,468.68 283.35,449.17 284.44,466.68 285.53,450.73 286.61,462.08 287.7,465.06 288.78,458.47 289.87,469.77 290.95,455.23 292.04,473.8 293.12,477.83 294.21,468.88 295.29,470.34 296.38,470.61 297.46,467.32 298.55,475.49 299.64,480.28 300.72,465.87 301.81,475.41 302.89,478.89 303.98,477.34 305.06,473.78 306.15,463.5 307.23,463.01 308.32,459.26 309.4,473.35 310.49,464.19 311.57,474.4 312.66,472.76 313.74,475.49 314.83,477.67 315.92,451.8 317,461.3 318.09,494.2 319.17,477.44 320.26,489.89 321.34,471.54 322.43,451.23 323.51,449 324.6,474.34 325.68,473.49 326.77,474.17 327.85,467.48 328.94,468.36 330.03,481.99 331.11,469.26 332.2,477.33 333.28,465.73 334.37,456.93 335.45,467.48 336.54,481.65 337.62,485.71 338.71,469.37 339.79,452.02 340.88,455.28 341.96,458.97 343.05,479.25 344.13,459.5 345.22,483.29 346.31,459.02 347.39,489.73 348.48,472.04 349.56,467.3 350.65,475.87 351.73,488.06 352.82,471.32 353.9,464.72 354.99,465.47 356.07,475.37 357.16,452.76 358.24,472.98 359.33,470.19 360.42,467.78 361.5,467.06 362.59,490.2 363.67,470.01 364.76,458.96 365.84,453.83 366.93,442.99 368.01,452.02 369.1,465.72 370.18,460.33 371.27,462.12 372.35,447.95 373.44,476.47 374.52,490.56 375.61,464.91 376.7,461.08 377.78,467.16 378.87,459.17 379.95,474.99 381.04,470.92 382.12,446.79 383.21,471.57 384.29,466.9 385.38,472.38 386.46,460.23 387.55,473.4 388.63,485.42 389.72,459.87 390.81,471.72 391.89,484.51 392.98,469.96 394.06,475.68 395.15,470.22 396.23,463.16 397.32,485.55 398.4,463.33 399.49,489.94 400.57,464.9 401.66,463.11 402.74,465.33 403.83,465 404.91,464.3 406,457.62 407.09,453.65 408.17,479.96 409.26,437.3 410.34,473.41 411.43,464.06 412.51,469.98 413.6,493.37 414.68,466.5 415.77,459.56 416.85,454.03 417.94,489.45 419.02,459.89 420.11,458.65 421.2,471.15 422.28,463.32 423.37,460.84 424.45,467.74 425.54,488.54 426.62,457.57 427.71,473.81 428.79,464.6 429.88,472.78 430.96,472.94 432.05,464.59 433.13,476.22 434.22,479.37 435.3,468.78 436.39,460.47 437.48,455.44 438.56,472.62 439.65,456.84 440.73,463.26 441.82,470.76 442.9,462.75 443.99,466.36 445.07,464.12 446.16,469.15 447.24,458.81 448.33,459.71 449.41,465.03 450.5,462.19 451.59,494.84 452.67,445.64 453.76,486.12 454.84,454.38 455.93,457.49 457.01,464.23 458.1,468.64 459.18,467.36 460.27,455.02 461.35,467.5 462.44,472.05 463.52,470.74 464.61,458.61 465.69,465.12 466.78,469 467.87,487.01 468.95,476.26 470.04,465.49 471.12,457.68 472.21,459.59 473.29,471.44 474.38,456.45 475.46,471.68 476.55,471.45 477.63,446.38 478.72,476.73 479.8,471.69 480.89,480.77 481.98,444.21 483.06,477.48 484.15,465.45 485.23,473.32 486.32,454.44 487.4,464.18 488.49,467.09 489.57,466.1 490.66,471.81 491.74,472.14 492.83,453.27 493.91,471.41 495,482.63 496.08,449.46 497.17,470.77 498.26,463.18 499.34,468.86 500.43,478.82 501.51,484.93 502.6,465.04 503.68,496.83 504.77,471.36 505.85,472.9 506.94,462.63 508.02,463.18 509.11,497.76 510.19,471.38 511.28,478.14 512.37,469.29 513.45,481.99 514.54,481.7 515.62,464.73 516.71,460.71 517.79,465.37 518.88,456.73 519.96,461.81 521.05,464.03 522.13,467.82 523.22,472.81 524.3,484.5 525.39,467.02 526.47,450.21 527.56,486.89 528.65,461.28 529.73,484.07 530.82,457.06 531.9,457.19 532.99,484.91 534.07,453.22 535.16,478.55 536.24,476.01 537.33,457.49 538.41,472.29 539.5,457.93 540.58,482.86 541.67,440.3 542.76,460.86 543.84,461.44 544.93,458.78 546.01,460.09 547.1,449.7 548.18,475.75 549.27,470.13 550.35,455.79 551.44,468.02 552.52,471.13 553.61,454.79 554.69,451.37 555.78,466.18 556.86,464.66 557.95,479.08 559.04,480.56 560.12,456.3 561.21,468.96 562.29,468.61 563.38,475.48 564.46,481.54 565.55,476.29 566.63,462.69 567.72,478.81 568.8,469.7 569.89,449.4 570.97,461.09 572.06,460.09 573.15,451.14 574.23,452.35 575.32,451.34 576.4,469.13 577.49,456.37 578.57,473.68 579.66,480.92 580.74,483.54 581.83,465.83 582.91,500.47 584,474.18 585.08,469.25 586.17,490.22 587.25,470.35 588.34,479.41 589.43,461.24 590.51,461.15 591.6,471.76 592.68,480.33 593.77,487.17 594.85,479.01 595.94,470.88 597.02,476.03 598.11,463.39 599.19,478.92 600.28,481.65 601.36,481.29 602.45,479.55 603.54,471.56 604.62,476.31 605.71,485.18 606.79,468.4 607.88,468.03 608.96,470.37 610.05,478.23 611.13,473.76 612.22,481.38 613.3,468.21 614.39,473.88 615.47,475.42 616.56,454.29 617.64,471.88 618.73,463.06 619.82,480.97 620.9,487.89 621.99,458.77 623.07,476.14 624.16,464.9 625.24,453.54 626.33,480.24 627.41,487.52 628.5,498.43 629.58,472.7 630.67,474.59 631.75,486.76 632.84,472.26 633.93,477.42 635.01,467.12 636.1,482.52 637.18,462.66 638.27,465.43 639.35,482.08 640.44,445.96 641.52,494.06 642.61,470.99 643.69,459.64 644.78,459.84 645.86,468.03 646.95,473.05 648.03,477.86 649.12,480.11 650.21,468.87 651.29,470.26 652.38,474.76 653.46,480.53 654.55,458.63 655.63,455.1 656.72,477.25 657.8,470.84 658.89,474.29 659.97,478.01 661.06,467.23 662.14,456.08 663.23,468.57 664.32,466.58 665.4,468.08 666.49,469.89 667.57,482.02 668.66,457.95 669.74,457.14 670.83,471.64 671.91,462.54 673,462.06 674.08,469.03 675.17,464.64 676.25,472.33 677.34,460.97 678.42,454.44 679.51,461.48 680.6,462.3 681.68,465.07 682.77,476.3 683.85,459.41 684.94,460.53 686.02,450.32 687.11,485.11 688.19,464.44 689.28,466.01 690.36,497.99 691.45,485.28 692.53,470.54 693.62,467.13 694.71,468.01 695.79,458.04 696.88,492.72 697.96,472.1 699.05,477.49 700.13,484.23 701.22,474.1 702.3,480.62 703.39,473.83 704.47,469.54 705.56,465.4 706.64,480.67 707.73,468.44 708.81,482.29 709.9,483.28 710.99,446.73 712.07,430.45 713.16,420.86 714.24,411.27 715.33,392.02 716.41,366.07 717.5,316.8 718.58,292.3 719.67,293.37 720.75,283.09 721.84,274.85 722.92,271.64 724.01,267.76 725.1,262.02 726.18,259.72 727.27,256.63 728.35,249.63 729.44,245.9 730.52,263.09 731.61,266.08 732.69,281.04 733.78,427.36 734.86,457.53 735.95,479.4 737.03,471.88 738.12,486.19 739.2,463.01 740.29,462.77 741.38,470.97 742.46,490.62 743.55,478.33 744.63,479.58 745.72,462.95 746.8,467.38 747.89,479.81 748.97,469.34 750.06,463.99 751.14,479.11 752.23,473.58 753.31,475.49 754.4,483.12 755.49,488.54 756.57,463.78 757.66,473.53 758.74,469.14 759.83,476.21 760.91,456.13 762,480.15 763.08,469.08 764.17,461.02 765.25,463.4 766.34,472.18 767.42,480.36 768.51,464.97 769.59,471.2 770.68,481.92 771.77,484.47 772.85,459.84 773.94,464.55 775.02,469.35 776.11,453.9 777.19,480.17 778.28,473.84 779.36,457.48 780.45,462.14 781.53,481.26 782.62,471.13 783.7,463.14 784.79,474.22 785.88,481.77 786.96,480.24 788.05,462.1 789.13,460.76 790.22,478.56 791.3,488.02 792.39,465.81 793.47,461.92 794.56,472.18 795.64,477.49 796.73,475.08 797.81,466.81 798.9,462.67 799.98,463.17 801.07,461.02 802.16,470.49 803.24,473.45 804.33,462.72 805.41,474.67 806.5,473.28 807.58,465.71 808.67,472.91 809.75,479.73 810.84,462.74 811.92,480.3 813.01,460.51 814.09,471.56 815.18,466.36 816.27,464.61 817.35,463.25 818.44,482.24 819.52,459.86 820.61,465.7 821.69,460.72 822.78,471.93 823.86,478.35 824.95,492.62 826.03,467.24 827.12,460.43 828.2,465.41 829.29,463.37 830.37,475.23 831.46,469.82 832.55,473.25 833.63,464.5 834.72,474.09 835.8,470.31 836.89,457.11 837.97,467.62 839.06,460.23 840.14,472.59 841.23,455.29 842.31,471.09 843.4,460.28 844.48,460.94 845.57,484.27 846.66,484.67 847.74,476.55 848.83,485.8 849.91,479.09 851,479.34 852.08,462.55 853.17,468.65 854.25,482.44 855.34,476.74 856.42,449.19 857.51,465.73 858.59,478.08 859.68,444.52 860.76,464.93 861.85,485.39 862.94,461.55 864.02,465.67 865.11,459.73 866.19,476.16 867.28,468.16 868.36,457.3 869.45,478.48 870.53,467.93 871.62,470.72 872.7,452.58 873.79,460.77 874.87,467.72 875.96,456.07 877.05,466.78 878.13,463.86 879.22,463.32 880.3,477.39 881.39,473.88 882.47,476.83 883.56,457.92 884.64,476.07 885.73,464.47 886.81,480.44 887.9,471.77 888.98,465.87 890.07,463.48 891.15,462.03 892.24,457.15 893.33,478.55 894.41,455.22 895.5,452.15 896.58,462.91 897.67,494.27 898.75,472.6 899.84,492.24 900.92,439.37 902.01,462.63 903.09,448.26 904.18,474.61 905.26,463.74 906.35,462.07 907.44,465.55 908.52,474.88 909.61,459.82 910.69,468.62 911.78,456.29 912.86,458.73 913.95,474.27 915.03,468.4 916.12,454.38 917.2,474.95 918.29,456.39 919.37,495.84 920.46,464.52 921.54,482.34 922.63,451.32 923.72,468.46 924.8,463.37 925.89,453.76 926.97,455.1 928.06,465.82 929.14,477.68 930.23,493.46 931.31,484.03 932.4,484.09 933.48,474.84 934.57,449.69 935.65,481.33 936.74,467.09 937.83,480.31 938.91,464.67 940,454.95 941.08,462.37 942.17,469.59 943.25,468.13 944.34,452.03 945.42,469.35 946.51,460.04 947.59,467.93 948.68,459.14 949.76,475.14 950.85,476.16 951.93,477.11 953.02,475.43 954.11,491.66 955.19,463.61 956.28,453.75 957.36,472.01 958.45,466.73 959.53,450.01 960.62,481.98 961.7,473.91 962.79,452.31 963.87,467.49 964.96,455.01 966.04,471.36 967.13,453.87 968.22,476.59 969.3,474.18 970.39,482.47 971.47,454.88 972.56,465.07 973.64,468.51 974.73,468.66 975.81,460.41 976.9,467.21 977.98,474.15 979.07,451.76 980.15,442.56 981.24,458.93 982.32,477.37 983.41,472.24 984.5,450.97 985.58,474.82 986.67,464.97 987.75,470.77 988.84,455.89 989.92,485.6 991.01,480.23 992.09,463.59 993.18,443.36 994.26,471.08 995.35,483.84 996.43,463.56 997.52,482.64 998.61,468.64 999.69,448.47 1000.78,456.47 1001.86,471.49 1002.95,468.5 1004.03,463.79 1005.12,450.59 1006.2,460.76 1007.29,461.41 1008.37,450.83 1009.46,474.3 1010.54,478.32 1011.63,457.76 1012.71,476.38 1013.8,457.68" fill="none" stroke="#f0f000" stroke-width="1" shape-rendering="crispEdges"/></svg>
<svg style="position:absolute;left:0;top:0;overflow:visible" width="10" height="10"><path d="M1005.74 457.42L1016.65 457.42L1011.2 464.84Z" fill="#f21e12"/><ellipse cx="1011.2" cy="451.51" rx="9.91" ry="9.85" fill="#f21e12"/><ellipse cx="1010.2" cy="452.01" rx="1.3" ry="1.8" fill="#200"/></svg>
<div style="left:4.5px;top:1.27px;width:5.71px;height:706.45px;background:#4f514f;"></div>
<div style="left:-1.81px;top:1.27px;width:6.31px;height:706.45px;background:#a9a9a9;"></div>
<div style="left:-1.81px;top:681.55px;width:1206.67px;height:26.17px;background:#4d4f4c;"></div>
</div></div>
<div class="clip" style="left:1187px;top:697px;width:1175px;height:684px"><div class="pn" style="transform:translate(-6.55px,-3.12px) scale(0.99147,0.99497)">
<div style="left:-20px;top:-20px;width:1300px;height:800px;background:#000;"></div>
<div style="left:-20px;top:-20px;width:1042.2px;height:47px;background:#1a1d1b;"></div>
<svg style="position:absolute;left:14.5px;top:8.1px" width="95.8" height="15.1" viewBox="120 45 2130 340" preserveAspectRatio="none"><g fill="none" stroke="#f8f8f8" stroke-width="80"><path d="M420 89H215Q164 89 164 140V163Q164 214 215 214H325Q376 214 376 265V290Q376 341 325 341H130"/><path d="M515 45V385"/><path d="M960 89H725Q654 89 654 160V270Q654 341 725 341H916V214H750"/><path d="M1044 45V341H1300"/><path d="M1535 89H1385Q1290 89 1290 184V246Q1290 341 1385 341H1535M1330 214H1520"/><path d="M1624 385V45M1624 60L1836 370M1836 385V45"/><path d="M1930 89H2250M2084 89V385"/></g></svg>
<div class="t" style="left:593.5px;width:400px;margin-left:-200px;text-align:center;top:6.93px;font-size:16.5px;line-height:16.5px;color:#f4f4f4;">2020-05-20 17:40:38</div>
<svg style="position:absolute;left:995px;top:4px;overflow:visible;z-index:5" width="22" height="22" viewBox="0 0 22 22"><g fill="none" stroke="#1a9ae0" stroke-width="2"><rect x="7.2" y="1.5" width="5.6" height="5.2"/><path d="M10 6.7V10.6M3.5 14V10.6H16.5V14"/><rect x="1.2" y="14" width="5.6" height="5.8"/><rect x="13.2" y="14" width="5.6" height="5.8"/></g></svg>
<div class="t" style="left:15.6px;top:51.75px;font-size:16.6px;line-height:16.6px;color:#f4f4f4;transform:scaleX(0.925);transform-origin:0 0;">Log</div>
<div class="t" style="left:15.6px;top:80.75px;font-size:16.6px;line-height:16.6px;color:#f4f4f4;transform:scaleX(0.925);transform-origin:0 0;">10 dB</div>
<div class="t" style="left:15.6px;top:166.95px;font-size:16.6px;line-height:16.6px;color:#f4f4f4;transform:scaleX(0.925);transform-origin:0 0;">Free</div>
<div class="t" style="left:15.6px;top:195.75px;font-size:16.6px;line-height:16.6px;color:#f4f4f4;transform:scaleX(0.925);transform-origin:0 0;">LgPwr</div>
<div class="t" style="left:15.6px;top:224.25px;font-size:16.6px;line-height:16.6px;color:#f4f4f4;transform:scaleX(0.925);transform-origin:0 0;">Cont</div>
<div class="t" style="left:21.3px;top:395.99px;font-size:15.6px;line-height:15.6px;color:#e8e800;font-weight:bold;">A</div>
<div class="t" style="left:44.6px;top:395.99px;font-size:15.6px;line-height:15.6px;color:#e8e800;">C&amp;W</div>
<div class="t" style="left:44.6px;top:426.09px;font-size:15.6px;line-height:15.6px;color:#e8e800;">P-PK</div>
<div class="t" style="left:21.3px;top:459.09px;font-size:15.6px;line-height:15.6px;color:#1e1f1c;">B</div>
<div class="t" style="left:44.6px;top:459.09px;font-size:15.6px;line-height:15.6px;color:#1e1f1c;">Blank</div>
<div class="t" style="left:44.6px;top:489.59px;font-size:15.6px;line-height:15.6px;color:#1e1f1c;">P-PK</div>
<div class="t" style="left:21.3px;top:523.09px;font-size:15.6px;line-height:15.6px;color:#1e1f1c;">C</div>
<div class="t" style="left:44.6px;top:523.09px;font-size:15.6px;line-height:15.6px;color:#1e1f1c;">Blank</div>
<div class="t" style="left:44.6px;top:553.59px;font-size:15.6px;line-height:15.6px;color:#1e1f1c;">P-PK</div>
<div class="t" style="left:21.3px;top:586.29px;font-size:15.6px;line-height:15.6px;color:#1e1f1c;">D</div>
<div class="t" style="left:44.6px;top:586.29px;font-size:15.6px;line-height:15.6px;color:#1e1f1c;">Blank</div>
<div class="t" style="left:44.6px;top:616.79px;font-size:15.6px;line-height:15.6px;color:#1e1f1c;">P-PK</div>
<div class="t" style="left:146px;top:34.79px;font-size:15.6px;line-height:15.6px;color:#f4f4f4;font-weight:bold;">Ref</div>
<div class="t" style="left:184.6px;top:34.79px;font-size:15.6px;line-height:15.6px;color:#f4f4f4;">0 dBm</div>
<div class="t" style="left:382px;top:34.79px;font-size:15.6px;line-height:15.6px;color:#f4f4f4;font-weight:bold;">Att</div>
<div class="t" style="left:415.5px;top:34.79px;font-size:15.6px;line-height:15.6px;color:#f4f4f4;">20 dB</div>
<svg style="position:absolute;left:0;top:0;overflow:visible" width="1200" height="700"><line x1="146.6" y1="112.5" x2="1013.8" y2="112.5" stroke="#2b2e2b" stroke-width="1.9"/><line x1="233.32" y1="54.8" x2="233.32" y2="631.8" stroke="#2b2e2b" stroke-width="1.9"/><line x1="146.6" y1="170.2" x2="1013.8" y2="170.2" stroke="#2b2e2b" stroke-width="1.9"/><line x1="320.04" y1="54.8" x2="320.04" y2="631.8" stroke="#2b2e2b" stroke-width="1.9"/><line x1="146.6" y1="227.9" x2="1013.8" y2="227.9" stroke="#2b2e2b" stroke-width="1.9"/><line x1="406.76" y1="54.8" x2="406.76" y2="631.8" stroke="#2b2e2b" stroke-width="1.9"/><line x1="146.6" y1="285.6" x2="1013.8" y2="285.6" stroke="#2b2e2b" stroke-width="1.9"/><line x1="493.48" y1="54.8" x2="493.48" y2="631.8" stroke="#2b2e2b" stroke-width="1.9"/><line x1="146.6" y1="343.3" x2="1013.8" y2="343.3" stroke="#2b2e2b" stroke-width="1.9"/><line x1="580.2" y1="54.8" x2="580.2" y2="631.8" stroke="#2b2e2b" stroke-width="1.9"/><line x1="146.6" y1="401" x2="1013.8" y2="401" stroke="#2b2e2b" stroke-width="1.9"/><line x1="666.92" y1="54.8" x2="666.92" y2="631.8" stroke="#2b2e2b" stroke-width="1.9"/><line x1="146.6" y1="458.7" x2="1013.8" y2="458.7" stroke="#2b2e2b" stroke-width="1.9"/><line x1="753.64" y1="54.8" x2="753.64" y2="631.8" stroke="#2b2e2b" stroke-width="1.9"/><line x1="146.6" y1="516.4" x2="1013.8" y2="516.4" stroke="#2b2e2b" stroke-width="1.9"/><line x1="840.36" y1="54.8" x2="840.36" y2="631.8" stroke="#2b2e2b" stroke-width="1.9"/><line x1="146.6" y1="574.1" x2="1013.8" y2="574.1" stroke="#2b2e2b" stroke-width="1.9"/><line x1="927.08" y1="54.8" x2="927.08" y2="631.8" stroke="#2b2e2b" stroke-width="1.9"/><rect x="146.6" y="54.8" width="867.2" height="577" fill="none" stroke="#8d908c" stroke-width="1.3"/><path d="M574.7 54.8L585.7 54.8L580.2 61.3Z" fill="#b8bab6"/><path d="M574.7 631.8L585.7 631.8L580.2 625.3Z" fill="#b8bab6"/></svg>
<div class="t" style="left:145.6px;width:200px;margin-left:-200px;text-align:right;top:48.71px;font-size:11.8px;line-height:11.8px;color:#e4e4e4;font-weight:bold;letter-spacing:0.05px;">0.0</div>
<div class="t" style="left:145.6px;width:200px;margin-left:-200px;text-align:right;top:106.41px;font-size:11.8px;line-height:11.8px;color:#e4e4e4;font-weight:bold;letter-spacing:0.05px;">-10.0</div>
<div class="t" style="left:145.6px;width:200px;margin-left:-200px;text-align:right;top:164.11px;font-size:11.8px;line-height:11.8px;color:#e4e4e4;font-weight:bold;letter-spacing:0.05px;">-20.0</div>
<div class="t" style="left:145.6px;width:200px;margin-left:-200px;text-align:right;top:221.81px;font-size:11.8px;line-height:11.8px;color:#e4e4e4;font-weight:bold;letter-spacing:0.05px;">-30.0</div>
<div class="t" style="left:145.6px;width:200px;margin-left:-200px;text-align:right;top:279.51px;font-size:11.8px;line-height:11.8px;color:#e4e4e4;font-weight:bold;letter-spacing:0.05px;">-40.0</div>
<div class="t" style="left:145.6px;width:200px;margin-left:-200px;text-align:right;top:337.21px;font-size:11.8px;line-height:11.8px;color:#e4e4e4;font-weight:bold;letter-spacing:0.05px;">-50.0</div>
<div class="t" style="left:145.6px;width:200px;margin-left:-200px;text-align:right;top:394.91px;font-size:11.8px;line-height:11.8px;color:#e4e4e4;font-weight:bold;letter-spacing:0.05px;">-60.0</div>
<div class="t" style="left:145.6px;width:200px;margin-left:-200px;text-align:right;top:452.61px;font-size:11.8px;line-height:11.8px;color:#e4e4e4;font-weight:bold;letter-spacing:0.05px;">-70.0</div>
<div class="t" style="left:145.6px;width:200px;margin-left:-200px;text-align:right;top:510.31px;font-size:11.8px;line-height:11.8px;color:#e4e4e4;font-weight:bold;letter-spacing:0.05px;">-80.0</div>
<div class="t" style="left:145.6px;width:200px;margin-left:-200px;text-align:right;top:568.01px;font-size:11.8px;line-height:11.8px;color:#e4e4e4;font-weight:bold;letter-spacing:0.05px;">-90.0</div>
<div class="t" style="left:145.6px;width:200px;margin-left:-200px;text-align:right;top:625.71px;font-size:11.8px;line-height:11.8px;color:#e4e4e4;font-weight:bold;letter-spacing:0.05px;">-100.0</div>
<div class="t" style="left:146px;top:642.03px;font-size:15.8px;line-height:15.8px;color:#f4f4f4;">Start</div>
<div class="t" style="left:190px;top:642.03px;font-size:15.8px;line-height:15.8px;color:#f4f4f4;">2.4 GHz</div>
<div class="t" style="left:493.2px;top:642.03px;font-size:15.8px;line-height:15.8px;color:#f4f4f4;">Center</div>
<div class="t" style="left:552.7px;top:642.03px;font-size:15.8px;line-height:15.8px;color:#f4f4f4;">2.42 GHz</div>
<div class="t" style="left:834.5px;top:642.03px;font-size:15.8px;line-height:15.8px;color:#f4f4f4;">Stop</div>
<div class="t" style="left:878px;top:642.03px;font-size:15.8px;line-height:15.8px;color:#f4f4f4;">2.44 GHz</div>
<div class="t" style="left:146px;top:667.43px;font-size:15.8px;line-height:15.8px;color:#f4f4f4;">RBW</div>
<div class="t" style="left:191px;top:667.43px;font-size:15.8px;line-height:15.8px;color:#f4f4f4;">100 kHz</div>
<div class="t" style="left:279.5px;top:667.43px;font-size:15.8px;line-height:15.8px;color:#f4f4f4;">VBW</div>
<div class="t" style="left:323.3px;top:667.43px;font-size:15.8px;line-height:15.8px;color:#f4f4f4;">100 kHz</div>
<div class="t" style="left:493.2px;top:667.43px;font-size:15.8px;line-height:15.8px;color:#f4f4f4;">Span</div>
<div class="t" style="left:552.7px;top:667.43px;font-size:15.8px;line-height:15.8px;color:#f4f4f4;">40 MHz</div>
<div class="t" style="left:834.5px;top:667.43px;font-size:15.8px;line-height:15.8px;color:#f4f4f4;">SWT</div>
<div class="t" style="left:878px;top:667.43px;font-size:15.8px;line-height:15.8px;color:#f4f4f4;">30 ms</div>
<div class="dia" style="left:133.2px;top:671.2px"></div>
<div class="dia" style="left:822.2px;top:671.7px"></div>
<div style="left:1013.8px;top:27px;width:8.4px;height:800px;background:#000;"></div>
<div style="left:1022.2px;top:-20px;width:160.8px;height:72.7px;background:#1b1e1c;"></div>
<div class="dot" style="left:1027.4px;top:12.9px"></div>
<div class="dot" style="left:1027.4px;top:23.1px"></div>
<div class="dot" style="left:1027.4px;top:33.3px"></div>
<div class="t" style="left:1102.6px;width:400px;margin-left:-200px;text-align:center;top:19.31px;font-size:17px;line-height:17px;color:#f4f4f4;font-weight:bold;letter-spacing:0.3px;">Frequency</div>
<div style="left:1022.2px;top:54.5px;width:160.8px;height:74.2px;background:#1f4f92;"></div>
<div style="left:1022.2px;top:130.3px;width:160.8px;height:73.8px;background:#1a1c19;"></div>
<div style="left:1022.2px;top:206.2px;width:160.8px;height:74.4px;background:#1a1c19;"></div>
<div style="left:1022.2px;top:282.8px;width:160.8px;height:72.9px;background:#1a1c19;"></div>
<div style="left:1022.2px;top:358.2px;width:160.8px;height:73.5px;background:#1a1c19;"></div>
<div style="left:1022.2px;top:434.4px;width:160.8px;height:73.5px;background:#1a1c19;"></div>
<div style="left:1022.2px;top:510.2px;width:160.8px;height:73.5px;background:#1a1c19;"></div>
<div style="left:1022.2px;top:585.9px;width:160.8px;height:74px;background:#1a1c19;"></div>
<div style="left:1022.2px;top:662px;width:160.8px;height:40px;background:#111410;"></div>
<div class="t" style="left:1102.6px;width:400px;margin-left:-200px;text-align:center;top:70.85px;font-size:16.6px;line-height:16.6px;color:#f4f4f4;font-weight:bold;letter-spacing:0.65px;">Center Freq</div>
<div class="t" style="left:1102.6px;width:400px;margin-left:-200px;text-align:center;top:101.99px;font-size:15.6px;line-height:15.6px;color:#f4f4f4;letter-spacing:-0.35px;">2.42 GHz</div>
<div class="t" style="left:1102.6px;width:400px;margin-left:-200px;text-align:center;top:146.75px;font-size:16.6px;line-height:16.6px;color:#f4f4f4;font-weight:bold;letter-spacing:0.65px;">Start Freq</div>
<div class="t" style="left:1102.6px;width:400px;margin-left:-200px;text-align:center;top:177.99px;font-size:15.6px;line-height:15.6px;color:#f4f4f4;letter-spacing:-0.35px;">2.4 GHz</div>
<div class="t" style="left:1102.6px;width:400px;margin-left:-200px;text-align:center;top:223.25px;font-size:16.6px;line-height:16.6px;color:#f4f4f4;font-weight:bold;letter-spacing:0.65px;">Stop Freq</div>
<div class="t" style="left:1102.6px;width:400px;margin-left:-200px;text-align:center;top:253.99px;font-size:15.6px;line-height:15.6px;color:#f4f4f4;letter-spacing:-0.35px;">2.44 GHz</div>
<div class="t" style="left:1102.6px;width:400px;margin-left:-200px;text-align:center;top:298.75px;font-size:16.6px;line-height:16.6px;color:#f4f4f4;font-weight:bold;letter-spacing:0.65px;">Freq Offset</div>
<div class="t" style="left:1102.6px;width:400px;margin-left:-200px;text-align:center;top:329.99px;font-size:15.6px;line-height:15.6px;color:#f4f4f4;">0 Hz</div>
<div class="t" style="left:1102.6px;width:400px;margin-left:-200px;text-align:center;top:363.95px;font-size:16.6px;line-height:16.6px;color:#f4f4f4;font-weight:bold;letter-spacing:0.65px;">Freq Step</div>
<div class="t" style="left:1102.6px;width:400px;margin-left:-200px;text-align:center;top:388.09px;font-size:15.6px;line-height:15.6px;color:#f4f4f4;">4 MHz</div>
<div style="left:1022.2px;top:404.6px;width:160.8px;height:21.4px;background:#111211;box-sizing:border-box;border-top:1.3px solid #3b3d3a;border-bottom:1.3px solid #3b3d3a;"></div>
<div style="left:1022.2px;top:404.6px;width:81.1px;height:21.4px;background:#4a8fc7;box-sizing:border-box;border:1.6px solid #18c4f2;"></div>
<div class="t" style="left:1062.75px;width:400px;margin-left:-200px;text-align:center;top:408.55px;font-size:14px;line-height:14px;color:#1a2838;">Auto</div>
<div class="t" style="left:1143.15px;width:400px;margin-left:-200px;text-align:center;top:408.38px;font-size:14.2px;line-height:14.2px;color:#f0f0f0;">Manual</div>
<div class="t" style="left:1102.6px;width:400px;margin-left:-200px;text-align:center;top:450.35px;font-size:16.6px;line-height:16.6px;color:#f4f4f4;font-weight:bold;letter-spacing:0.65px;">Signal Track</div>
<div style="left:1023px;top:480.6px;width:80.3px;height:20.4px;background:#111211;box-sizing:border-box;border:1.3px solid #3b3d3a;"></div>
<div style="left:1103.3px;top:480.4px;width:79.7px;height:20.8px;background:#4a8fc7;box-sizing:border-box;border:1.6px solid #18c4f2;"></div>
<div class="t" style="left:1062.75px;width:400px;margin-left:-200px;text-align:center;top:483.55px;font-size:14px;line-height:14px;color:#f0f0f0;">On</div>
<div class="t" style="left:1143.15px;width:400px;margin-left:-200px;text-align:center;top:483.55px;font-size:14px;line-height:14px;color:#1a2838;">Off</div>
<div class="t" style="left:1102.6px;width:400px;margin-left:-200px;text-align:center;top:538.25px;font-size:16.6px;line-height:16.6px;color:#f4f4f4;font-weight:bold;letter-spacing:0.65px;">Peak<svg width="17" height="10" viewBox="0 0 17 10" style="display:inline-block;vertical-align:-1.2px;margin:0 0.3px"><path d="M0.5 5H12" stroke="#f4f4f4" stroke-width="1.5"/><path d="M10 1.6L16.6 5L10 8.4Z" fill="#f4f4f4"/></svg>CF</div>
<div class="t" style="left:1102.6px;width:400px;margin-left:-200px;text-align:center;top:614.25px;font-size:16.6px;line-height:16.6px;color:#f4f4f4;font-weight:bold;letter-spacing:0.65px;">CF<svg width="17" height="10" viewBox="0 0 17 10" style="display:inline-block;vertical-align:-1.2px;margin:0 0.3px"><path d="M0.5 5H12" stroke="#f4f4f4" stroke-width="1.5"/><path d="M10 1.6L16.6 5L10 8.4Z" fill="#f4f4f4"/></svg>Step</div>
<div class="t" style="left:1102.6px;width:400px;margin-left:-200px;text-align:center;top:668.49px;font-size:17.5px;line-height:17.5px;color:#f4f4f4;letter-spacing:0.7px;">Local</div>
<svg style="position:absolute;left:0;top:0;overflow:visible" width="1200" height="700"><polyline points="146.6,459.82 147.69,476.35 148.77,471.51 149.86,441.72 150.94,463.4 152.03,468.98 153.11,464.51 154.2,501.1 155.28,441.53 156.37,462.06 157.45,474.04 158.54,486.79 159.62,468.48 160.71,468.87 161.79,476.83 162.88,462.29 163.97,472.94 165.05,482.54 166.14,475.22 167.22,467.53 168.31,477.73 169.39,475.57 170.48,465.17 171.56,493.14 172.65,475.9 173.73,462.84 174.82,468.77 175.9,463.01 176.99,478.61 178.08,481.55 179.16,447.98 180.25,456.61 181.33,465.1 182.42,472.22 183.5,493.62 184.59,455.18 185.67,489.76 186.76,467.75 187.84,471.56 188.93,478.85 190.01,488.94 191.1,474.3 192.18,469.22 193.27,476.29 194.36,487.5 195.44,454.35 196.53,467.88 197.61,461.28 198.7,467 199.78,479.97 200.87,479.96 201.95,462.26 203.04,484.6 204.12,467.09 205.21,465.09 206.29,500.91 207.38,475.34 208.47,485.64 209.55,449.41 210.64,473.84 211.72,475.46 212.81,474.17 213.89,475.3 214.98,453.23 216.06,479.02 217.15,453 218.23,478.36 219.32,464.2 220.4,474.27 221.49,469.12 222.57,492.25 223.66,480.24 224.75,466.58 225.83,463.49 226.92,466.44 228,472.98 229.09,478.44 230.17,443.68 231.26,467.92 232.34,482.09 233.43,477.37 234.51,472.11 235.6,447.05 236.68,474.7 237.77,474.17 238.86,467.55 239.94,475.04 241.03,460.03 242.11,453.03 243.2,458.53 244.28,464.22 245.37,475.34 246.45,468.13 247.54,465.19 248.62,468.36 249.71,486.26 250.79,477.61 251.88,459.71 252.96,467.93 254.05,460.65 255.14,470.7 256.22,464.9 257.31,463.65 258.39,451.14 259.48,445.66 260.56,470.88 261.65,463.41 262.73,496.73 263.82,471.31 264.9,463.27 265.99,489.43 267.07,476.05 268.16,458.7 269.25,463.76 270.33,489.75 271.42,480.33 272.5,453.9 273.59,469.99 274.67,454.44 275.76,472.93 276.84,457.73 277.93,457.53 279.01,453.2 280.1,448.87 281.18,444.53 282.27,422.98 283.35,398.77 284.44,371.79 285.53,344.8 286.61,319.84 287.7,295.01 288.78,276.23 289.87,265.75 290.95,271.24 292.04,263.99 293.12,264.02 294.21,276.73 295.29,265.34 296.38,267.34 297.46,256.51 298.55,268.1 299.64,265.8 300.72,265.39 301.81,281.59 302.89,273.05 303.98,284.28 305.06,272.96 306.15,290.95 307.23,288.66 308.32,279.86 309.4,291.86 310.49,304.8 311.57,315.24 312.66,337.88 313.74,379.64 314.83,413.87 315.92,437.15 317,475.46 318.09,480.17 319.17,478.39 320.26,500.22 321.34,468.5 322.43,473.53 323.51,457.76 324.6,469.36 325.68,491.21 326.77,471.64 327.85,467.1 328.94,468.35 330.03,451.86 331.11,456.06 332.2,443.21 333.28,479.72 334.37,479.01 335.45,472.71 336.54,468.27 337.62,466.11 338.71,475.39 339.79,470.24 340.88,485.36 341.96,480.83 343.05,454.07 344.13,487.41 345.22,485.3 346.31,472.83 347.39,490.32 348.48,467.29 349.56,472.38 350.65,456.15 351.73,468.12 352.82,453.5 353.9,479.9 354.99,482.23 356.07,471.19 357.16,467.44 358.24,467.32 359.33,468.5 360.42,454.39 361.5,463.27 362.59,478.06 363.67,500.04 364.76,470.74 365.84,466.66 366.93,479.75 368.01,469.7 369.1,470.12 370.18,470.02 371.27,483.02 372.35,457.1 373.44,465.01 374.52,453.57 375.61,443.94 376.7,461.88 377.78,477.35 378.87,458.01 379.95,499.03 381.04,463.9 382.12,460.21 383.21,464.71 384.29,467.52 385.38,465.72 386.46,477.61 387.55,469.24 388.63,460.26 389.72,462.22 390.81,479.16 391.89,471.76 392.98,491.38 394.06,476.59 395.15,459.78 396.23,469.2 397.32,466.73 398.4,478.5 399.49,475.71 400.57,495.35 401.66,446.18 402.74,485.18 403.83,467.1 404.91,457.01 406,494.92 407.09,498.03 408.17,476.56 409.26,469.01 410.34,488.04 411.43,480.77 412.51,465.64 413.6,463.32 414.68,471.98 415.77,467 416.85,484.78 417.94,482.11 419.02,489.59 420.11,459.4 421.2,454.68 422.28,476.67 423.37,478.47 424.45,461.22 425.54,469.51 426.62,461.93 427.71,468.03 428.79,473.28 429.88,458.61 430.96,487.78 432.05,456.02 433.13,443.4 434.22,457.17 435.3,482.91 436.39,476.65 437.48,456.5 438.56,485.84 439.65,482 440.73,492.95 441.82,465.2 442.9,469.12 443.99,464.05 445.07,479.54 446.16,474.29 447.24,453.27 448.33,475.24 449.41,476.55 450.5,475.81 451.59,472.14 452.67,476.34 453.76,464.13 454.84,471.09 455.93,471.23 457.01,483.56 458.1,458.88 459.18,499.97 460.27,457.35 461.35,476.57 462.44,465.93 463.52,494.97 464.61,466.44 465.69,467.5 466.78,461.28 467.87,494.86 468.95,479.23 470.04,452.44 471.12,466 472.21,470.41 473.29,467.38 474.38,472.15 475.46,468.3 476.55,498.83 477.63,471.57 478.72,470.26 479.8,463.31 480.89,480.07 481.98,464.68 483.06,453.43 484.15,487.56 485.23,462.09 486.32,448.77 487.4,470 488.49,467.57 489.57,462.33 490.66,452.73 491.74,471.26 492.83,463.3 493.91,477.54 495,467.3 496.08,453.18 497.17,470.1 498.26,473.26 499.34,470.29 500.43,460.79 501.51,468.97 502.6,464.67 503.68,473.95 504.77,464.7 505.85,469.39 506.94,459.8 508.02,460.38 509.11,458.21 510.19,458.08 511.28,480.84 512.37,453.33 513.45,460.31 514.54,472.51 515.62,473.43 516.71,488.57 517.79,482.5 518.88,465.22 519.96,473.58 521.05,500.61 522.13,466.3 523.22,477.83 524.3,458.53 525.39,454.21 526.47,493.15 527.56,464.04 528.65,461.84 529.73,456.28 530.82,475.63 531.9,459.9 532.99,466.4 534.07,466.91 535.16,459.61 536.24,471.11 537.33,474.05 538.41,463.86 539.5,472.75 540.58,461.2 541.67,470.07 542.76,490.16 543.84,467.15 544.93,472.11 546.01,477.06 547.1,492.06 548.18,470.81 549.27,478.1 550.35,472.88 551.44,463.49 552.52,488.28 553.61,500.71 554.69,457.44 555.78,472.9 556.86,467.74 557.95,471.87 559.04,469.03 560.12,464.96 561.21,472.97 562.29,478.08 563.38,477.59 564.46,467.7 565.55,470.4 566.63,474.69 567.72,465.5 568.8,469.34 569.89,465.57 570.97,469.01 572.06,480.26 573.15,448.26 574.23,465.76 575.32,474.18 576.4,461.75 577.49,470.9 578.57,462.77 579.66,467.18 580.74,465.07 581.83,479.5 582.91,500.73 584,468.89 585.08,481.15 586.17,466.59 587.25,484.12 588.34,500.14 589.43,468.79 590.51,458.97 591.6,479.69 592.68,477 593.77,489.42 594.85,470.04 595.94,489.25 597.02,475.74 598.11,467.7 599.19,465.12 600.28,474.39 601.36,473.84 602.45,463.94 603.54,467.58 604.62,464.96 605.71,486.66 606.79,471.02 607.88,471.97 608.96,467.37 610.05,484.41 611.13,451.48 612.22,486.63 613.3,460.84 614.39,490.35 615.47,468.15 616.56,472.44 617.64,478.06 618.73,460.02 619.82,452.14 620.9,484.87 621.99,458.8 623.07,463.95 624.16,476.31 625.24,457.76 626.33,484.85 627.41,483.84 628.5,472.17 629.58,468.45 630.67,474.35 631.75,481 632.84,469.95 633.93,469 635.01,472 636.1,475.76 637.18,457.23 638.27,475.05 639.35,447.01 640.44,480.05 641.52,469.96 642.61,461.26 643.69,440.68 644.78,479.29 645.86,477 646.95,469.88 648.03,458.92 649.12,470.6 650.21,449.84 651.29,480.29 652.38,484.02 653.46,471.7 654.55,461.28 655.63,472.59 656.72,476.2 657.8,479.69 658.89,471.67 659.97,470.74 661.06,474.28 662.14,467.94 663.23,480.75 664.32,461.78 665.4,468.5 666.49,464.2 667.57,476.6 668.66,459.1 669.74,480.71 670.83,480.81 671.91,476 673,474.35 674.08,467.05 675.17,475.7 676.25,470.43 677.34,479.31 678.42,462.58 679.51,478.42 680.6,445.86 681.68,474.65 682.77,468.79 683.85,484.5 684.94,481.11 686.02,467.93 687.11,448.99 688.19,456.72 689.28,448.64 690.36,482.19 691.45,449.76 692.53,468.1 693.62,470.09 694.71,468.93 695.79,467.08 696.88,475.99 697.96,450.68 699.05,464.47 700.13,456.18 701.22,459.86 702.3,461.45 703.39,493.34 704.47,468.92 705.56,471.31 706.64,459.79 707.73,482.74 708.81,501.45 709.9,457.49 710.99,469.64 712.07,460.21 713.16,484.38 714.24,480.45 715.33,451.87 716.41,487.81 717.5,497.52 718.58,490.13 719.67,471.21 720.75,498.89 721.84,480.62 722.92,468.07 724.01,471.32 725.1,480.52 726.18,473.34 727.27,460.79 728.35,479.35 729.44,476.8 730.52,477.37 731.61,458.78 732.69,461.6 733.78,452 734.86,475.08 735.95,483.42 737.03,481.87 738.12,491.58 739.2,468.65 740.29,463.12 741.38,462.47 742.46,458.72 743.55,456.38 744.63,470.66 745.72,459.62 746.8,463.71 747.89,465.2 748.97,466.81 750.06,458.39 751.14,475.51 752.23,479.74 753.31,455.85 754.4,477.59 755.49,466.25 756.57,499.85 757.66,461.58 758.74,481.26 759.83,464.49 760.91,464.43 762,472.25 763.08,484.76 764.17,469.7 765.25,495.04 766.34,483.91 767.42,468.78 768.51,485.15 769.59,470.32 770.68,478.81 771.77,477.44 772.85,486.31 773.94,452.46 775.02,482.81 776.11,472.25 777.19,466.05 778.28,482.12 779.36,477.02 780.45,465.27 781.53,486.11 782.62,484.07 783.7,462.69 784.79,482.35 785.88,471.42 786.96,473.91 788.05,476.86 789.13,458.75 790.22,458.24 791.3,474.9 792.39,457.1 793.47,480.46 794.56,487.89 795.64,466.23 796.73,473.1 797.81,475.87 798.9,471.91 799.98,452.85 801.07,470.37 802.16,492.38 803.24,479.45 804.33,467.56 805.41,480.5 806.5,499.94 807.58,454.38 808.67,474.29 809.75,498.18 810.84,494.47 811.92,463.27 813.01,480.01 814.09,478.78 815.18,474.34 816.27,484.58 817.35,464.24 818.44,473.05 819.52,484.79 820.61,482.47 821.69,455.81 822.78,473.97 823.86,468.83 824.95,481.53 826.03,477.47 827.12,489.22 828.2,500.51 829.29,464.78 830.37,478.53 831.46,482.21 832.55,463.68 833.63,474.24 834.72,465.79 835.8,453.97 836.89,447.15 837.97,482.95 839.06,479.48 840.14,443.84 841.23,462.46 842.31,454.4 843.4,451.4 844.48,481.33 845.57,461.91 846.66,469.57 847.74,458.71 848.83,464.26 849.91,460.91 851,443.8 852.08,455.38 853.17,470.87 854.25,462.41 855.34,452.34 856.42,471.66 857.51,463.44 858.59,470.51 859.68,452.06 860.76,467.27 861.85,461.23 862.94,455.29 864.02,461.53 865.11,460.67 866.19,441.59 867.28,474.99 868.36,485.06 869.45,468.31 870.53,457.47 871.62,462.17 872.7,456.9 873.79,488.72 874.87,487.07 875.96,457.37 877.05,494.91 878.13,459.07 879.22,453.27 880.3,451.75 881.39,471.45 882.47,452.32 883.56,493.36 884.64,479.91 885.73,465.06 886.81,462.35 887.9,456.28 888.98,487.53 890.07,458.3 891.15,466.61 892.24,456.43 893.33,454.99 894.41,465.15 895.5,453.95 896.58,445.73 897.67,446.81 898.75,444.81 899.84,457.64 900.92,478.14 902.01,466.63 903.09,476.64 904.18,461.39 905.26,443.65 906.35,462.26 907.44,470.45 908.52,458.83 909.61,485.36 910.69,435.38 911.78,479.24 912.86,455.31 913.95,467.2 915.03,461.74 916.12,441.98 917.2,476.29 918.29,479.68 919.37,491.18 920.46,463.31 921.54,488.43 922.63,456.5 923.72,449.24 924.8,477.26 925.89,474.01 926.97,466.55 928.06,432.62 929.14,453.46 930.23,459.61 931.31,462.02 932.4,450.88 933.48,451.78 934.57,458.78 935.65,461.91 936.74,463.26 937.83,454.32 938.91,442.54 940,470.93 941.08,462.3 942.17,455.35 943.25,471.17 944.34,454.65 945.42,461.67 946.51,470.2 947.59,440.86 948.68,479.8 949.76,451.72 950.85,455.17 951.93,475.19 953.02,466.83 954.11,440.86 955.19,460.8 956.28,455.48 957.36,477.87 958.45,459.46 959.53,459.59 960.62,459.53 961.7,468.01 962.79,457.35 963.87,458.3 964.96,482.03 966.04,468.06 967.13,469.27 968.22,457.77 969.3,450.86 970.39,465.01 971.47,457.89 972.56,466.37 973.64,457.52 974.73,478.29 975.81,469.47 976.9,459.72 977.98,461.16 979.07,453.41 980.15,462.5 981.24,460.96 982.32,465.73 983.41,471.06 984.5,465.56 985.58,459.01 986.67,445.57 987.75,478.17 988.84,476.03 989.92,453.5 991.01,486.79 992.09,461.47 993.18,457.77 994.26,472.31 995.35,457.23 996.43,492.95 997.52,461.15 998.61,472.66 999.69,473.17 1000.78,466.84 1001.86,457.87 1002.95,465.03 1004.03,469.59 1005.12,467.25 1006.2,475.57 1007.29,467.19 1008.37,460.09 1009.46,460.98 1010.54,468.41 1011.63,486.24 1012.71,474.01 1013.8,467.05" fill="none" stroke="#f0f000" stroke-width="1" shape-rendering="crispEdges"/></svg>
<svg style="position:absolute;left:0;top:0;overflow:visible" width="10" height="10"><path d="M1006.01 485.4L1016.55 485.4L1011.28 490.19Z" fill="#f21e12"/><ellipse cx="1011.28" cy="479.74" rx="9.58" ry="9.45" fill="#f21e12"/><ellipse cx="1010.28" cy="480.24" rx="1.3" ry="1.8" fill="#200"/></svg>
<div style="left:-0.45px;top:683.56px;width:1187.13px;height:26.13px;background:#4d4f4c;"></div>
<div style="left:1184.66px;top:-3.9px;width:15.13px;height:713.59px;background:#9d9d9d;"></div>
</div></div><div style="position:absolute;left:2355.5px;top:683.8px;width:7px;height:13.4px;background:#a9a9a9"></div><div style="position:absolute;left:0;top:683.8px;width:4px;height:13.4px;background:#b9b9b9"></div>
</body></html>
